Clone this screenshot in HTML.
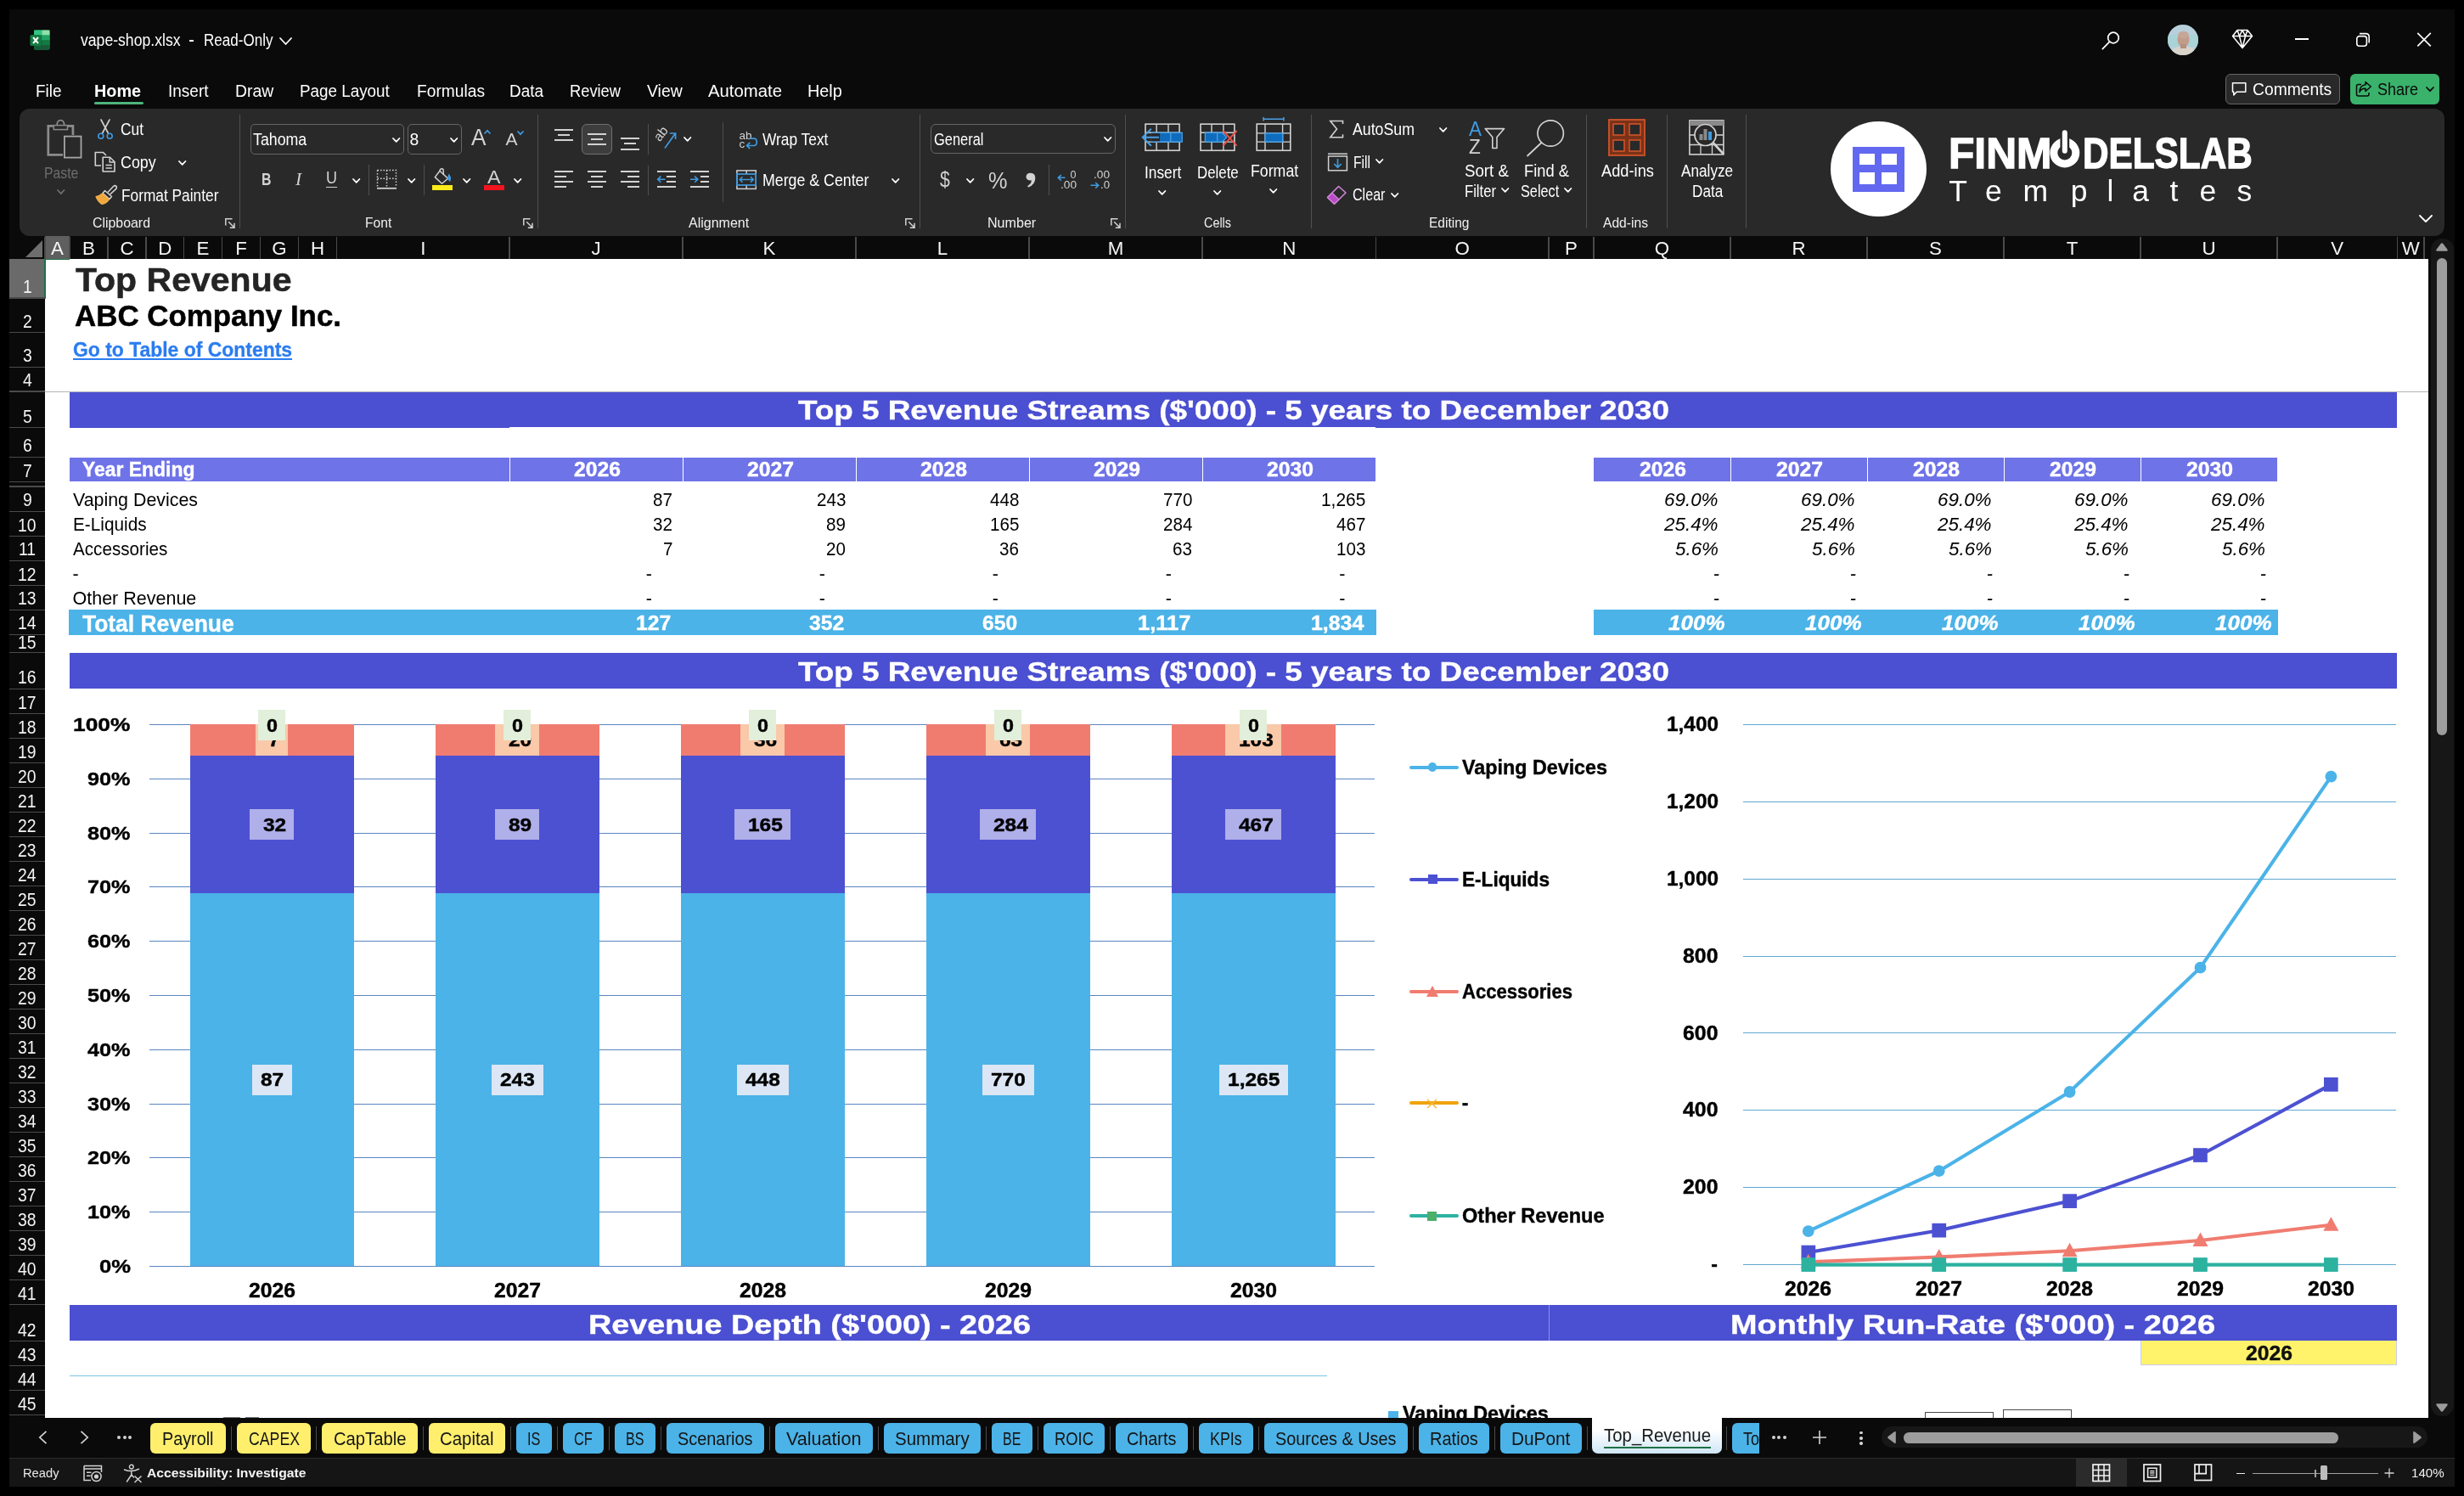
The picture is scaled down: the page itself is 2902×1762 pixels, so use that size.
<!DOCTYPE html><html><head><meta charset="utf-8"><style>
html,body{margin:0;padding:0;background:#000;}
body{width:2902px;height:1762px;position:relative;overflow:hidden;font-family:"Liberation Sans",sans-serif;}
.t{position:absolute;white-space:nowrap;line-height:1;}
.r{position:absolute;}
</style></head><body><div id="w" style="position:absolute;left:0;top:0;width:2902px;height:1762px;will-change:transform">
<div class="r" style="left:11.00px;top:11.00px;width:2880.00px;height:1740.00px;background:#0a0a0a;"></div>
<div class="r" style="left:53.00px;top:305.00px;width:2807.00px;height:1365.00px;background:#fff;"></div>
<div class="r" style="left:53.00px;top:460.50px;width:2807.00px;height:1.00px;background:#b4b4b4;"></div>
<div class="t" style="left:88.50px;top:311.00px;font-size:38.50px;color:#242424;font-weight:bold;transform:scaleX(1.0654);transform-origin:0 0;-webkit-text-stroke:0.5px #242424;">Top Revenue</div>
<div class="t" style="left:87.50px;top:355.00px;font-size:34.50px;color:#000;font-weight:bold;transform:scaleX(1.0112);transform-origin:0 0;-webkit-text-stroke:0.5px #000;">ABC Company Inc.</div>
<div class="t" style="left:86.00px;top:401.00px;font-size:23.00px;color:#2b7cf0;font-weight:bold;transform:scaleX(0.9964);transform-origin:0 0;-webkit-text-stroke:0.3px #2b7cf0;">Go to Table of Contents</div>
<div class="r" style="left:86.00px;top:421.60px;width:258.00px;height:2.00px;background:#2b7cf0;"></div>
<div class="r" style="left:82.00px;top:461.50px;width:2741.00px;height:42.00px;background:#4b4fd1;"></div>
<div class="r" style="left:600.00px;top:502.70px;width:1020.00px;height:0.80px;background:#fff;"></div>
<div class="t" style="left:939.50px;top:467.00px;font-size:32.00px;color:#fff;font-weight:bold;transform:scaleX(1.1515);transform-origin:0 0;-webkit-text-stroke-width:0.4px;">Top 5 Revenue Streams ($'000) - 5 years to December 2030</div>
<div class="r" style="left:82.00px;top:768.80px;width:2741.00px;height:42.40px;background:#4b4fd1;"></div>
<div class="t" style="left:939.50px;top:775.00px;font-size:32.00px;color:#fff;font-weight:bold;transform:scaleX(1.1515);transform-origin:0 0;-webkit-text-stroke-width:0.4px;">Top 5 Revenue Streams ($'000) - 5 years to December 2030</div>
<div class="r" style="left:82.00px;top:539.00px;width:1538.00px;height:28.00px;background:#6f73e8;"></div>
<div class="r" style="left:599.50px;top:539.00px;width:1.50px;height:28.00px;background:#fff;"></div>
<div class="r" style="left:803.50px;top:539.00px;width:1.50px;height:28.00px;background:#fff;"></div>
<div class="r" style="left:1007.50px;top:539.00px;width:1.50px;height:28.00px;background:#fff;"></div>
<div class="r" style="left:1211.50px;top:539.00px;width:1.50px;height:28.00px;background:#fff;"></div>
<div class="r" style="left:1415.50px;top:539.00px;width:1.50px;height:28.00px;background:#fff;"></div>
<div class="t" style="left:97.00px;top:542.00px;font-size:23.00px;color:#fff;font-weight:bold;transform:scaleX(0.9968);transform-origin:0 0;-webkit-text-stroke-width:0.4px;">Year Ending</div>
<div class="t" style="left:675.50px;top:542.00px;font-size:23.00px;color:#fff;font-weight:bold;transform:scaleX(1.0749);transform-origin:0 0;-webkit-text-stroke-width:0.4px;">2026</div>
<div class="t" style="left:879.50px;top:542.00px;font-size:23.00px;color:#fff;font-weight:bold;transform:scaleX(1.0749);transform-origin:0 0;-webkit-text-stroke-width:0.4px;">2027</div>
<div class="t" style="left:1083.50px;top:542.00px;font-size:23.00px;color:#fff;font-weight:bold;transform:scaleX(1.0749);transform-origin:0 0;-webkit-text-stroke-width:0.4px;">2028</div>
<div class="t" style="left:1287.50px;top:542.00px;font-size:23.00px;color:#fff;font-weight:bold;transform:scaleX(1.0749);transform-origin:0 0;-webkit-text-stroke-width:0.4px;">2029</div>
<div class="t" style="left:1491.75px;top:542.00px;font-size:23.00px;color:#fff;font-weight:bold;transform:scaleX(1.0749);transform-origin:0 0;-webkit-text-stroke-width:0.4px;">2030</div>
<div class="r" style="left:1877.00px;top:539.00px;width:805.00px;height:28.00px;background:#6f73e8;"></div>
<div class="r" style="left:2037.50px;top:539.00px;width:1.50px;height:28.00px;background:#fff;"></div>
<div class="r" style="left:2198.50px;top:539.00px;width:1.50px;height:28.00px;background:#fff;"></div>
<div class="r" style="left:2359.50px;top:539.00px;width:1.50px;height:28.00px;background:#fff;"></div>
<div class="r" style="left:2520.50px;top:539.00px;width:1.50px;height:28.00px;background:#fff;"></div>
<div class="t" style="left:1931.00px;top:542.00px;font-size:23.00px;color:#fff;font-weight:bold;transform:scaleX(1.0749);transform-origin:0 0;-webkit-text-stroke-width:0.4px;">2026</div>
<div class="t" style="left:2092.00px;top:542.00px;font-size:23.00px;color:#fff;font-weight:bold;transform:scaleX(1.0749);transform-origin:0 0;-webkit-text-stroke-width:0.4px;">2027</div>
<div class="t" style="left:2253.00px;top:542.00px;font-size:23.00px;color:#fff;font-weight:bold;transform:scaleX(1.0749);transform-origin:0 0;-webkit-text-stroke-width:0.4px;">2028</div>
<div class="t" style="left:2414.00px;top:542.00px;font-size:23.00px;color:#fff;font-weight:bold;transform:scaleX(1.0749);transform-origin:0 0;-webkit-text-stroke-width:0.4px;">2029</div>
<div class="t" style="left:2575.00px;top:542.00px;font-size:23.00px;color:#fff;font-weight:bold;transform:scaleX(1.0749);transform-origin:0 0;-webkit-text-stroke-width:0.4px;">2030</div>
<div class="t" style="left:85.50px;top:579.00px;font-size:21.50px;color:#000;transform:scaleX(0.9946);transform-origin:0 0;">Vaping Devices</div>
<div class="t" style="left:769.30px;top:579.00px;font-size:21.50px;color:#000;transform:scaleX(0.9576);transform-origin:0 0;">87</div>
<div class="t" style="left:961.85px;top:579.00px;font-size:21.50px;color:#000;transform:scaleX(0.9576);transform-origin:0 0;">243</div>
<div class="t" style="left:1165.85px;top:579.00px;font-size:21.50px;color:#000;transform:scaleX(0.9576);transform-origin:0 0;">448</div>
<div class="t" style="left:1369.85px;top:579.00px;font-size:21.50px;color:#000;transform:scaleX(0.9576);transform-origin:0 0;">770</div>
<div class="t" style="left:1556.40px;top:579.00px;font-size:21.50px;color:#000;transform:scaleX(0.9721);transform-origin:0 0;">1,265</div>
<div class="t" style="left:1960.10px;top:579.00px;font-size:21.50px;color:#000;font-style:italic;transform:scaleX(1.0416);transform-origin:0 0;">69.0%</div>
<div class="t" style="left:2121.10px;top:579.00px;font-size:21.50px;color:#000;font-style:italic;transform:scaleX(1.0416);transform-origin:0 0;">69.0%</div>
<div class="t" style="left:2282.10px;top:579.00px;font-size:21.50px;color:#000;font-style:italic;transform:scaleX(1.0416);transform-origin:0 0;">69.0%</div>
<div class="t" style="left:2443.10px;top:579.00px;font-size:21.50px;color:#000;font-style:italic;transform:scaleX(1.0416);transform-origin:0 0;">69.0%</div>
<div class="t" style="left:2604.10px;top:579.00px;font-size:21.50px;color:#000;font-style:italic;transform:scaleX(1.0416);transform-origin:0 0;">69.0%</div>
<div class="t" style="left:85.50px;top:608.00px;font-size:21.50px;color:#000;transform:scaleX(0.9662);transform-origin:0 0;">E-Liquids</div>
<div class="t" style="left:769.30px;top:608.00px;font-size:21.50px;color:#000;transform:scaleX(0.9576);transform-origin:0 0;">32</div>
<div class="t" style="left:973.30px;top:608.00px;font-size:21.50px;color:#000;transform:scaleX(0.9576);transform-origin:0 0;">89</div>
<div class="t" style="left:1165.85px;top:608.00px;font-size:21.50px;color:#000;transform:scaleX(0.9576);transform-origin:0 0;">165</div>
<div class="t" style="left:1369.85px;top:608.00px;font-size:21.50px;color:#000;transform:scaleX(0.9576);transform-origin:0 0;">284</div>
<div class="t" style="left:1574.35px;top:608.00px;font-size:21.50px;color:#000;transform:scaleX(0.9576);transform-origin:0 0;">467</div>
<div class="t" style="left:1960.10px;top:608.00px;font-size:21.50px;color:#000;font-style:italic;transform:scaleX(1.0416);transform-origin:0 0;">25.4%</div>
<div class="t" style="left:2121.10px;top:608.00px;font-size:21.50px;color:#000;font-style:italic;transform:scaleX(1.0416);transform-origin:0 0;">25.4%</div>
<div class="t" style="left:2282.10px;top:608.00px;font-size:21.50px;color:#000;font-style:italic;transform:scaleX(1.0416);transform-origin:0 0;">25.4%</div>
<div class="t" style="left:2443.10px;top:608.00px;font-size:21.50px;color:#000;font-style:italic;transform:scaleX(1.0416);transform-origin:0 0;">25.4%</div>
<div class="t" style="left:2604.10px;top:608.00px;font-size:21.50px;color:#000;font-style:italic;transform:scaleX(1.0416);transform-origin:0 0;">25.4%</div>
<div class="t" style="left:85.50px;top:637.00px;font-size:21.50px;color:#000;transform:scaleX(0.9603);transform-origin:0 0;">Accessories</div>
<div class="t" style="left:780.75px;top:637.00px;font-size:21.50px;color:#000;transform:scaleX(0.9576);transform-origin:0 0;">7</div>
<div class="t" style="left:973.30px;top:637.00px;font-size:21.50px;color:#000;transform:scaleX(0.9576);transform-origin:0 0;">20</div>
<div class="t" style="left:1177.30px;top:637.00px;font-size:21.50px;color:#000;transform:scaleX(0.9576);transform-origin:0 0;">36</div>
<div class="t" style="left:1381.30px;top:637.00px;font-size:21.50px;color:#000;transform:scaleX(0.9576);transform-origin:0 0;">63</div>
<div class="t" style="left:1574.35px;top:637.00px;font-size:21.50px;color:#000;transform:scaleX(0.9576);transform-origin:0 0;">103</div>
<div class="t" style="left:1972.60px;top:637.00px;font-size:21.50px;color:#000;font-style:italic;transform:scaleX(1.0407);transform-origin:0 0;">5.6%</div>
<div class="t" style="left:2133.60px;top:637.00px;font-size:21.50px;color:#000;font-style:italic;transform:scaleX(1.0407);transform-origin:0 0;">5.6%</div>
<div class="t" style="left:2294.60px;top:637.00px;font-size:21.50px;color:#000;font-style:italic;transform:scaleX(1.0407);transform-origin:0 0;">5.6%</div>
<div class="t" style="left:2455.60px;top:637.00px;font-size:21.50px;color:#000;font-style:italic;transform:scaleX(1.0407);transform-origin:0 0;">5.6%</div>
<div class="t" style="left:2616.60px;top:637.00px;font-size:21.50px;color:#000;font-style:italic;transform:scaleX(1.0407);transform-origin:0 0;">5.6%</div>
<div class="t" style="left:85.50px;top:666.00px;font-size:21.50px;color:#000;">-</div>
<div class="t" style="left:760.84px;top:666.00px;font-size:21.50px;color:#000;">-</div>
<div class="t" style="left:964.84px;top:666.00px;font-size:21.50px;color:#000;">-</div>
<div class="t" style="left:1168.84px;top:666.00px;font-size:21.50px;color:#000;">-</div>
<div class="t" style="left:1372.84px;top:666.00px;font-size:21.50px;color:#000;">-</div>
<div class="t" style="left:1577.34px;top:666.00px;font-size:21.50px;color:#000;">-</div>
<div class="t" style="left:2017.84px;top:666.00px;font-size:21.50px;color:#000;font-style:italic;">-</div>
<div class="t" style="left:2178.84px;top:666.00px;font-size:21.50px;color:#000;font-style:italic;">-</div>
<div class="t" style="left:2339.84px;top:666.00px;font-size:21.50px;color:#000;font-style:italic;">-</div>
<div class="t" style="left:2500.84px;top:666.00px;font-size:21.50px;color:#000;font-style:italic;">-</div>
<div class="t" style="left:2661.84px;top:666.00px;font-size:21.50px;color:#000;font-style:italic;">-</div>
<div class="t" style="left:85.50px;top:695.00px;font-size:21.50px;color:#000;">Other Revenue</div>
<div class="t" style="left:760.84px;top:695.00px;font-size:21.50px;color:#000;">-</div>
<div class="t" style="left:964.84px;top:695.00px;font-size:21.50px;color:#000;">-</div>
<div class="t" style="left:1168.84px;top:695.00px;font-size:21.50px;color:#000;">-</div>
<div class="t" style="left:1372.84px;top:695.00px;font-size:21.50px;color:#000;">-</div>
<div class="t" style="left:1577.34px;top:695.00px;font-size:21.50px;color:#000;">-</div>
<div class="t" style="left:2017.84px;top:695.00px;font-size:21.50px;color:#000;font-style:italic;">-</div>
<div class="t" style="left:2178.84px;top:695.00px;font-size:21.50px;color:#000;font-style:italic;">-</div>
<div class="t" style="left:2339.84px;top:695.00px;font-size:21.50px;color:#000;font-style:italic;">-</div>
<div class="t" style="left:2500.84px;top:695.00px;font-size:21.50px;color:#000;font-style:italic;">-</div>
<div class="t" style="left:2661.84px;top:695.00px;font-size:21.50px;color:#000;font-style:italic;">-</div>
<div class="r" style="left:81.00px;top:718.00px;width:1539.50px;height:29.70px;background:#4bb3e8;"></div>
<div class="t" style="left:97.40px;top:722.00px;font-size:27.00px;color:#fff;font-weight:bold;transform:scaleX(0.9784);transform-origin:0 0;-webkit-text-stroke-width:0.4px;">Total Revenue</div>
<div class="t" style="left:748.70px;top:723.00px;font-size:23.00px;color:#fff;font-weight:bold;transform:scaleX(1.0710);transform-origin:0 0;-webkit-text-stroke-width:0.4px;">127</div>
<div class="t" style="left:952.70px;top:723.00px;font-size:23.00px;color:#fff;font-weight:bold;transform:scaleX(1.0710);transform-origin:0 0;-webkit-text-stroke-width:0.4px;">352</div>
<div class="t" style="left:1156.70px;top:723.00px;font-size:23.00px;color:#fff;font-weight:bold;transform:scaleX(1.0710);transform-origin:0 0;-webkit-text-stroke-width:0.4px;">650</div>
<div class="t" style="left:1339.50px;top:723.00px;font-size:23.00px;color:#fff;font-weight:bold;transform:scaleX(1.1068);transform-origin:0 0;-webkit-text-stroke-width:0.4px;">1,117</div>
<div class="t" style="left:1544.00px;top:723.00px;font-size:23.00px;color:#fff;font-weight:bold;transform:scaleX(1.0824);transform-origin:0 0;-webkit-text-stroke-width:0.4px;">1,834</div>
<div class="r" style="left:1877.00px;top:718.00px;width:806.00px;height:29.70px;background:#4bb3e8;"></div>
<div class="t" style="left:1964.60px;top:723.00px;font-size:23.00px;color:#fff;font-weight:bold;font-style:italic;transform:scaleX(1.1322);transform-origin:0 0;-webkit-text-stroke-width:0.4px;">100%</div>
<div class="t" style="left:2125.60px;top:723.00px;font-size:23.00px;color:#fff;font-weight:bold;font-style:italic;transform:scaleX(1.1322);transform-origin:0 0;-webkit-text-stroke-width:0.4px;">100%</div>
<div class="t" style="left:2286.60px;top:723.00px;font-size:23.00px;color:#fff;font-weight:bold;font-style:italic;transform:scaleX(1.1322);transform-origin:0 0;-webkit-text-stroke-width:0.4px;">100%</div>
<div class="t" style="left:2447.60px;top:723.00px;font-size:23.00px;color:#fff;font-weight:bold;font-style:italic;transform:scaleX(1.1322);transform-origin:0 0;-webkit-text-stroke-width:0.4px;">100%</div>
<div class="t" style="left:2608.60px;top:723.00px;font-size:23.00px;color:#fff;font-weight:bold;font-style:italic;transform:scaleX(1.1322);transform-origin:0 0;-webkit-text-stroke-width:0.4px;">100%</div>
<div class="r" style="left:82.00px;top:1537.00px;width:2741.00px;height:42.30px;background:#4b4fd1;"></div>
<div class="r" style="left:1823.50px;top:1537.00px;width:1.00px;height:42.30px;background:#8f92e6;"></div>
<div class="t" style="left:692.50px;top:1544.00px;font-size:32.00px;color:#fff;font-weight:bold;transform:scaleX(1.1799);transform-origin:0 0;-webkit-text-stroke-width:0.4px;">Revenue Depth ($'000) - 2026</div>
<div class="t" style="left:2038.00px;top:1544.00px;font-size:32.00px;color:#fff;font-weight:bold;transform:scaleX(1.1837);transform-origin:0 0;-webkit-text-stroke-width:0.4px;">Monthly Run-Rate ($'000) - 2026</div>
<div class="r" style="left:2520.50px;top:1579.30px;width:302.50px;height:28.70px;background:#fff36b;box-sizing:border-box;border:1.5px solid #c9cde6;border-top:none"></div>
<div class="t" style="left:2644.50px;top:1583.00px;font-size:23.00px;color:#111;font-weight:bold;transform:scaleX(1.0749);transform-origin:0 0;-webkit-text-stroke-width:0.4px;">2026</div>
<div class="r" style="left:82.00px;top:1620.00px;width:1481.00px;height:1.20px;background:#7cc4e6;"></div>
<div class="r" style="left:1635.40px;top:1661.70px;width:11.20px;height:11.30px;background:#4bb3e8;"></div>
<div class="t" style="left:1651.50px;top:1654.00px;font-size:23.00px;color:#000;font-weight:bold;transform:scaleX(1.0175);transform-origin:0 0;-webkit-text-stroke-width:0.4px;">Vaping Devices</div>
<div class="r" style="left:2267.30px;top:1662.60px;width:80.70px;height:17.40px;background:#fff;box-sizing:border-box;border:1.4px solid #4a4a4a"></div>
<div class="r" style="left:2359.30px;top:1660.00px;width:80.70px;height:20.00px;background:#fff;box-sizing:border-box;border:1.4px solid #4a4a4a"></div>
<div class="r" style="left:263.00px;top:1668.80px;width:20.00px;height:1.20px;background:#777;"></div>
<div class="r" style="left:289.00px;top:1668.80px;width:16.00px;height:1.20px;background:#777;"></div>
<div class="r" style="left:176.00px;top:1491.00px;width:1442.50px;height:1.00px;background:#5a86c0;"></div>
<div class="t" style="left:116.50px;top:1480.00px;font-size:22.90px;color:#000;font-weight:bold;transform:scaleX(1.1179);transform-origin:0 0;-webkit-text-stroke-width:0.4px;">0%</div>
<div class="r" style="left:176.00px;top:1427.00px;width:1442.50px;height:1.00px;background:#5a86c0;"></div>
<div class="t" style="left:103.00px;top:1416.00px;font-size:22.90px;color:#000;font-weight:bold;transform:scaleX(1.1018);transform-origin:0 0;-webkit-text-stroke-width:0.4px;">10%</div>
<div class="r" style="left:176.00px;top:1363.00px;width:1442.50px;height:1.00px;background:#5a86c0;"></div>
<div class="t" style="left:103.00px;top:1352.00px;font-size:22.90px;color:#000;font-weight:bold;transform:scaleX(1.1018);transform-origin:0 0;-webkit-text-stroke-width:0.4px;">20%</div>
<div class="r" style="left:176.00px;top:1300.00px;width:1442.50px;height:1.00px;background:#5a86c0;"></div>
<div class="t" style="left:103.00px;top:1289.00px;font-size:22.90px;color:#000;font-weight:bold;transform:scaleX(1.1018);transform-origin:0 0;-webkit-text-stroke-width:0.4px;">30%</div>
<div class="r" style="left:176.00px;top:1236.00px;width:1442.50px;height:1.00px;background:#5a86c0;"></div>
<div class="t" style="left:103.00px;top:1225.00px;font-size:22.90px;color:#000;font-weight:bold;transform:scaleX(1.1018);transform-origin:0 0;-webkit-text-stroke-width:0.4px;">40%</div>
<div class="r" style="left:176.00px;top:1172.00px;width:1442.50px;height:1.00px;background:#5a86c0;"></div>
<div class="t" style="left:103.00px;top:1161.00px;font-size:22.90px;color:#000;font-weight:bold;transform:scaleX(1.1018);transform-origin:0 0;-webkit-text-stroke-width:0.4px;">50%</div>
<div class="r" style="left:176.00px;top:1108.00px;width:1442.50px;height:1.00px;background:#5a86c0;"></div>
<div class="t" style="left:103.00px;top:1097.00px;font-size:22.90px;color:#000;font-weight:bold;transform:scaleX(1.1018);transform-origin:0 0;-webkit-text-stroke-width:0.4px;">60%</div>
<div class="r" style="left:176.00px;top:1044.00px;width:1442.50px;height:1.00px;background:#5a86c0;"></div>
<div class="t" style="left:103.00px;top:1033.00px;font-size:22.90px;color:#000;font-weight:bold;transform:scaleX(1.1018);transform-origin:0 0;-webkit-text-stroke-width:0.4px;">70%</div>
<div class="r" style="left:176.00px;top:981.00px;width:1442.50px;height:1.00px;background:#5a86c0;"></div>
<div class="t" style="left:103.00px;top:970.00px;font-size:22.90px;color:#000;font-weight:bold;transform:scaleX(1.1018);transform-origin:0 0;-webkit-text-stroke-width:0.4px;">80%</div>
<div class="r" style="left:176.00px;top:917.00px;width:1442.50px;height:1.00px;background:#5a86c0;"></div>
<div class="t" style="left:103.00px;top:906.00px;font-size:22.90px;color:#000;font-weight:bold;transform:scaleX(1.1018);transform-origin:0 0;-webkit-text-stroke-width:0.4px;">90%</div>
<div class="r" style="left:176.00px;top:853.00px;width:1442.50px;height:1.00px;background:#5a86c0;"></div>
<div class="t" style="left:86.00px;top:842.00px;font-size:22.90px;color:#000;font-weight:bold;transform:scaleX(1.1525);transform-origin:0 0;-webkit-text-stroke-width:0.4px;">100%</div>
<div class="r" style="left:224.20px;top:1051.70px;width:192.90px;height:439.80px;background:#4bb3e8;"></div>
<div class="r" style="left:224.20px;top:890.00px;width:192.90px;height:161.70px;background:#4c51d2;"></div>
<div class="r" style="left:224.20px;top:853.40px;width:192.90px;height:36.60px;background:#f07c70;"></div>
<div class="t" style="left:293.10px;top:1509.00px;font-size:23.00px;color:#000;font-weight:bold;transform:scaleX(1.0749);transform-origin:0 0;-webkit-text-stroke-width:0.4px;">2026</div>
<div class="r" style="left:296.60px;top:1253.50px;width:47.20px;height:36.00px;background:#dce6f4;"></div>
<div class="t" style="left:306.60px;top:1262.00px;font-size:21.50px;color:#000;font-weight:bold;transform:scaleX(1.1374);transform-origin:0 0;-webkit-text-stroke-width:0.4px;">87</div>
<div class="r" style="left:294.10px;top:953.00px;width:52.20px;height:36.00px;background:#afafea;"></div>
<div class="t" style="left:309.80px;top:962.00px;font-size:21.50px;color:#000;font-weight:bold;transform:scaleX(1.1374);transform-origin:0 0;-webkit-text-stroke-width:0.4px;">32</div>
<div class="r" style="left:300.90px;top:853.40px;width:38.60px;height:36.60px;background:#f9c9a9;"></div>
<div class="t" style="left:316.40px;top:862.00px;font-size:21.50px;color:#000;font-weight:bold;transform:scaleX(1.1374);transform-origin:0 0;-webkit-text-stroke-width:0.4px;">7</div>
<div class="r" style="left:303.70px;top:836.20px;width:32.50px;height:35.80px;background:#e2efda;"></div>
<div class="t" style="left:313.70px;top:845.00px;font-size:21.50px;color:#000;font-weight:bold;transform:scaleX(1.0872);transform-origin:0 0;-webkit-text-stroke-width:0.4px;">0</div>
<div class="r" style="left:513.20px;top:1051.70px;width:192.90px;height:439.80px;background:#4bb3e8;"></div>
<div class="r" style="left:513.20px;top:890.00px;width:192.90px;height:161.70px;background:#4c51d2;"></div>
<div class="r" style="left:513.20px;top:853.40px;width:192.90px;height:36.60px;background:#f07c70;"></div>
<div class="t" style="left:582.10px;top:1509.00px;font-size:23.00px;color:#000;font-weight:bold;transform:scaleX(1.0749);transform-origin:0 0;-webkit-text-stroke-width:0.4px;">2027</div>
<div class="r" style="left:578.80px;top:1253.50px;width:60.80px;height:36.00px;background:#dce6f4;"></div>
<div class="t" style="left:588.80px;top:1262.00px;font-size:21.50px;color:#000;font-weight:bold;transform:scaleX(1.1374);transform-origin:0 0;-webkit-text-stroke-width:0.4px;">243</div>
<div class="r" style="left:583.10px;top:953.00px;width:52.20px;height:36.00px;background:#afafea;"></div>
<div class="t" style="left:598.80px;top:962.00px;font-size:21.50px;color:#000;font-weight:bold;transform:scaleX(1.1374);transform-origin:0 0;-webkit-text-stroke-width:0.4px;">89</div>
<div class="r" style="left:583.10px;top:853.40px;width:52.20px;height:36.60px;background:#f9c9a9;"></div>
<div class="t" style="left:598.60px;top:862.00px;font-size:21.50px;color:#000;font-weight:bold;transform:scaleX(1.1374);transform-origin:0 0;-webkit-text-stroke-width:0.4px;">20</div>
<div class="r" style="left:592.70px;top:836.20px;width:32.50px;height:35.80px;background:#e2efda;"></div>
<div class="t" style="left:602.70px;top:845.00px;font-size:21.50px;color:#000;font-weight:bold;transform:scaleX(1.0872);transform-origin:0 0;-webkit-text-stroke-width:0.4px;">0</div>
<div class="r" style="left:802.20px;top:1051.70px;width:192.90px;height:439.80px;background:#4bb3e8;"></div>
<div class="r" style="left:802.20px;top:890.00px;width:192.90px;height:161.70px;background:#4c51d2;"></div>
<div class="r" style="left:802.20px;top:853.40px;width:192.90px;height:36.60px;background:#f07c70;"></div>
<div class="t" style="left:871.10px;top:1509.00px;font-size:23.00px;color:#000;font-weight:bold;transform:scaleX(1.0749);transform-origin:0 0;-webkit-text-stroke-width:0.4px;">2028</div>
<div class="r" style="left:867.80px;top:1253.50px;width:60.80px;height:36.00px;background:#dce6f4;"></div>
<div class="t" style="left:877.80px;top:1262.00px;font-size:21.50px;color:#000;font-weight:bold;transform:scaleX(1.1374);transform-origin:0 0;-webkit-text-stroke-width:0.4px;">448</div>
<div class="r" style="left:865.30px;top:953.00px;width:65.80px;height:36.00px;background:#afafea;"></div>
<div class="t" style="left:881.00px;top:962.00px;font-size:21.50px;color:#000;font-weight:bold;transform:scaleX(1.1374);transform-origin:0 0;-webkit-text-stroke-width:0.4px;">165</div>
<div class="r" style="left:872.10px;top:853.40px;width:52.20px;height:36.60px;background:#f9c9a9;"></div>
<div class="t" style="left:887.60px;top:862.00px;font-size:21.50px;color:#000;font-weight:bold;transform:scaleX(1.1374);transform-origin:0 0;-webkit-text-stroke-width:0.4px;">36</div>
<div class="r" style="left:881.70px;top:836.20px;width:32.50px;height:35.80px;background:#e2efda;"></div>
<div class="t" style="left:891.70px;top:845.00px;font-size:21.50px;color:#000;font-weight:bold;transform:scaleX(1.0872);transform-origin:0 0;-webkit-text-stroke-width:0.4px;">0</div>
<div class="r" style="left:1091.20px;top:1051.70px;width:192.90px;height:439.80px;background:#4bb3e8;"></div>
<div class="r" style="left:1091.20px;top:890.00px;width:192.90px;height:161.70px;background:#4c51d2;"></div>
<div class="r" style="left:1091.20px;top:853.40px;width:192.90px;height:36.60px;background:#f07c70;"></div>
<div class="t" style="left:1160.10px;top:1509.00px;font-size:23.00px;color:#000;font-weight:bold;transform:scaleX(1.0749);transform-origin:0 0;-webkit-text-stroke-width:0.4px;">2029</div>
<div class="r" style="left:1156.80px;top:1253.50px;width:60.80px;height:36.00px;background:#dce6f4;"></div>
<div class="t" style="left:1166.80px;top:1262.00px;font-size:21.50px;color:#000;font-weight:bold;transform:scaleX(1.1374);transform-origin:0 0;-webkit-text-stroke-width:0.4px;">770</div>
<div class="r" style="left:1154.30px;top:953.00px;width:65.80px;height:36.00px;background:#afafea;"></div>
<div class="t" style="left:1170.00px;top:962.00px;font-size:21.50px;color:#000;font-weight:bold;transform:scaleX(1.1374);transform-origin:0 0;-webkit-text-stroke-width:0.4px;">284</div>
<div class="r" style="left:1161.10px;top:853.40px;width:52.20px;height:36.60px;background:#f9c9a9;"></div>
<div class="t" style="left:1176.60px;top:862.00px;font-size:21.50px;color:#000;font-weight:bold;transform:scaleX(1.1374);transform-origin:0 0;-webkit-text-stroke-width:0.4px;">63</div>
<div class="r" style="left:1170.70px;top:836.20px;width:32.50px;height:35.80px;background:#e2efda;"></div>
<div class="t" style="left:1180.70px;top:845.00px;font-size:21.50px;color:#000;font-weight:bold;transform:scaleX(1.0872);transform-origin:0 0;-webkit-text-stroke-width:0.4px;">0</div>
<div class="r" style="left:1380.20px;top:1051.70px;width:192.90px;height:439.80px;background:#4bb3e8;"></div>
<div class="r" style="left:1380.20px;top:890.00px;width:192.90px;height:161.70px;background:#4c51d2;"></div>
<div class="r" style="left:1380.20px;top:853.40px;width:192.90px;height:36.60px;background:#f07c70;"></div>
<div class="t" style="left:1449.10px;top:1509.00px;font-size:23.00px;color:#000;font-weight:bold;transform:scaleX(1.0749);transform-origin:0 0;-webkit-text-stroke-width:0.4px;">2030</div>
<div class="r" style="left:1435.50px;top:1253.50px;width:81.40px;height:36.00px;background:#dce6f4;"></div>
<div class="t" style="left:1445.50px;top:1262.00px;font-size:21.50px;color:#000;font-weight:bold;transform:scaleX(1.1412);transform-origin:0 0;-webkit-text-stroke-width:0.4px;">1,265</div>
<div class="r" style="left:1443.30px;top:953.00px;width:65.80px;height:36.00px;background:#afafea;"></div>
<div class="t" style="left:1459.00px;top:962.00px;font-size:21.50px;color:#000;font-weight:bold;transform:scaleX(1.1374);transform-origin:0 0;-webkit-text-stroke-width:0.4px;">467</div>
<div class="r" style="left:1443.30px;top:853.40px;width:65.80px;height:36.60px;background:#f9c9a9;"></div>
<div class="t" style="left:1458.80px;top:862.00px;font-size:21.50px;color:#000;font-weight:bold;transform:scaleX(1.1374);transform-origin:0 0;-webkit-text-stroke-width:0.4px;">103</div>
<div class="r" style="left:1459.70px;top:836.20px;width:32.50px;height:35.80px;background:#e2efda;"></div>
<div class="t" style="left:1469.70px;top:845.00px;font-size:21.50px;color:#000;font-weight:bold;transform:scaleX(1.0872);transform-origin:0 0;-webkit-text-stroke-width:0.4px;">0</div>
<div class="r" style="left:1660.00px;top:901.80px;width:57.80px;height:4.00px;background:#4bb3e8;border-radius:2px"></div>
<div class="r" style="left:1681.80px;top:898.40px;width:10.60px;height:10.60px;background:#4bb3e8;border-radius:50%"></div>
<div class="t" style="left:1721.80px;top:893.00px;font-size:23.00px;color:#000;font-weight:bold;transform:scaleX(1.0133);transform-origin:0 0;-webkit-text-stroke-width:0.4px;">Vaping Devices</div>
<div class="r" style="left:1660.00px;top:1033.80px;width:57.80px;height:4.00px;background:#4c51d2;border-radius:2px"></div>
<div class="r" style="left:1682.00px;top:1030.20px;width:11.00px;height:11.00px;background:#4c51d2;"></div>
<div class="t" style="left:1721.80px;top:1025.00px;font-size:23.00px;color:#000;font-weight:bold;transform:scaleX(0.9831);transform-origin:0 0;-webkit-text-stroke-width:0.4px;">E-Liquids</div>
<div class="r" style="left:1660.00px;top:1165.80px;width:57.80px;height:4.00px;background:#f07c70;border-radius:2px"></div>
<svg class="r" style="left:1680.00px;top:1161.00px;" width="14" height="13" viewBox="0 0 14 13"><path d="M7 0 L14 13 L0 13Z" fill="#f07c70"/></svg>
<div class="t" style="left:1721.80px;top:1157.00px;font-size:23.00px;color:#000;font-weight:bold;transform:scaleX(0.9591);transform-origin:0 0;-webkit-text-stroke-width:0.4px;">Accessories</div>
<div class="r" style="left:1660.00px;top:1297.30px;width:57.80px;height:4.00px;background:#f0a30a;border-radius:2px"></div>
<svg class="r" style="left:1680.00px;top:1293.50px;" width="13" height="12" viewBox="0 0 13 12"><path d="M1 1 L12 11 M12 1 L1 11" stroke="#f5b43c" stroke-width="1.5"/></svg>
<div class="t" style="left:1721.80px;top:1288.00px;font-size:23.00px;color:#000;font-weight:bold;-webkit-text-stroke-width:0.4px;">-</div>
<div class="r" style="left:1660.00px;top:1429.80px;width:57.80px;height:4.00px;background:#2db2a0;border-radius:2px"></div>
<div class="r" style="left:1681.00px;top:1426.50px;width:11.00px;height:11.00px;background:#4caf6a;"></div>
<div class="t" style="left:1721.80px;top:1421.00px;font-size:23.00px;color:#000;font-weight:bold;transform:scaleX(1.0238);transform-origin:0 0;-webkit-text-stroke-width:0.4px;">Other Revenue</div>
<div class="r" style="left:2052.90px;top:1489.00px;width:769.40px;height:1.00px;background:#5fa8d0;"></div>
<div class="t" style="left:2015.34px;top:1478.00px;font-size:23.00px;color:#000;font-weight:bold;-webkit-text-stroke-width:0.4px;">-</div>
<div class="r" style="left:2052.90px;top:1398.00px;width:769.40px;height:1.00px;background:#5fa8d0;"></div>
<div class="t" style="left:1982.00px;top:1387.00px;font-size:23.00px;color:#000;font-weight:bold;transform:scaleX(1.0814);transform-origin:0 0;-webkit-text-stroke-width:0.4px;">200</div>
<div class="r" style="left:2052.90px;top:1307.00px;width:769.40px;height:1.00px;background:#5fa8d0;"></div>
<div class="t" style="left:1982.00px;top:1296.00px;font-size:23.00px;color:#000;font-weight:bold;transform:scaleX(1.0814);transform-origin:0 0;-webkit-text-stroke-width:0.4px;">400</div>
<div class="r" style="left:2052.90px;top:1216.00px;width:769.40px;height:1.00px;background:#5fa8d0;"></div>
<div class="t" style="left:1982.00px;top:1206.00px;font-size:23.00px;color:#000;font-weight:bold;transform:scaleX(1.0814);transform-origin:0 0;-webkit-text-stroke-width:0.4px;">600</div>
<div class="r" style="left:2052.90px;top:1126.00px;width:769.40px;height:1.00px;background:#5fa8d0;"></div>
<div class="t" style="left:1982.00px;top:1115.00px;font-size:23.00px;color:#000;font-weight:bold;transform:scaleX(1.0814);transform-origin:0 0;-webkit-text-stroke-width:0.4px;">800</div>
<div class="r" style="left:2052.90px;top:1035.00px;width:769.40px;height:1.00px;background:#5fa8d0;"></div>
<div class="t" style="left:1962.50px;top:1024.00px;font-size:23.00px;color:#000;font-weight:bold;transform:scaleX(1.0598);transform-origin:0 0;-webkit-text-stroke-width:0.4px;">1,000</div>
<div class="r" style="left:2052.90px;top:944.00px;width:769.40px;height:1.00px;background:#5fa8d0;"></div>
<div class="t" style="left:1962.50px;top:933.00px;font-size:23.00px;color:#000;font-weight:bold;transform:scaleX(1.0598);transform-origin:0 0;-webkit-text-stroke-width:0.4px;">1,200</div>
<div class="r" style="left:2052.90px;top:853.00px;width:769.40px;height:1.00px;background:#5fa8d0;"></div>
<div class="t" style="left:1962.50px;top:842.00px;font-size:23.00px;color:#000;font-weight:bold;transform:scaleX(1.0598);transform-origin:0 0;-webkit-text-stroke-width:0.4px;">1,400</div>
<div class="t" style="left:2102.34px;top:1507.00px;font-size:23.00px;color:#000;font-weight:bold;transform:scaleX(1.0749);transform-origin:0 0;-webkit-text-stroke-width:0.4px;">2026</div>
<div class="t" style="left:2256.22px;top:1507.00px;font-size:23.00px;color:#000;font-weight:bold;transform:scaleX(1.0749);transform-origin:0 0;-webkit-text-stroke-width:0.4px;">2027</div>
<div class="t" style="left:2410.10px;top:1507.00px;font-size:23.00px;color:#000;font-weight:bold;transform:scaleX(1.0749);transform-origin:0 0;-webkit-text-stroke-width:0.4px;">2028</div>
<div class="t" style="left:2563.98px;top:1507.00px;font-size:23.00px;color:#000;font-weight:bold;transform:scaleX(1.0749);transform-origin:0 0;-webkit-text-stroke-width:0.4px;">2029</div>
<div class="t" style="left:2717.86px;top:1507.00px;font-size:23.00px;color:#000;font-weight:bold;transform:scaleX(1.0749);transform-origin:0 0;-webkit-text-stroke-width:0.4px;">2030</div>
<svg class="r" style="left:2040.00px;top:840.00px;" width="800" height="670" viewBox="0 0 800 670"><polyline points="89.8,610.1 243.7,539.2 397.6,446.0 551.5,299.7 705.4,74.7" fill="none" stroke="#4bb3e8" stroke-width="4.1" stroke-linejoin="round" stroke-linecap="round"/><polyline points="89.8,635.1 243.7,609.2 397.6,574.6 551.5,520.5 705.4,437.4" fill="none" stroke="#4c51d2" stroke-width="4.1" stroke-linejoin="round" stroke-linecap="round"/><polyline points="89.8,646.4 243.7,640.5 397.6,633.2 551.5,621.0 705.4,602.8" fill="none" stroke="#f07c70" stroke-width="4.1" stroke-linejoin="round" stroke-linecap="round"/><polyline points="89.8,649.6 243.7,649.6 397.6,649.6 551.5,649.6 705.4,649.6" fill="none" stroke="#2db2a0" stroke-width="4.1" stroke-linejoin="round" stroke-linecap="round"/><circle cx="89.8" cy="610.1" r="6.9" fill="#4bb3e8"/><circle cx="243.7" cy="539.2" r="6.9" fill="#4bb3e8"/><circle cx="397.6" cy="446.0" r="6.9" fill="#4bb3e8"/><circle cx="551.5" cy="299.7" r="6.9" fill="#4bb3e8"/><circle cx="705.4" cy="74.7" r="6.9" fill="#4bb3e8"/><rect x="81.5" y="626.7" width="16.7" height="16.7" fill="#4c51d2"/><rect x="235.4" y="600.8" width="16.7" height="16.7" fill="#4c51d2"/><rect x="389.3" y="566.3" width="16.7" height="16.7" fill="#4c51d2"/><rect x="543.1" y="512.2" width="16.7" height="16.7" fill="#4c51d2"/><rect x="697.0" y="429.0" width="16.7" height="16.7" fill="#4c51d2"/><path d="M89.8 636.9 L98.8 653.4 L80.8 653.4Z" fill="#f07c70"/><path d="M243.7 631.0 L252.7 647.5 L234.7 647.5Z" fill="#f07c70"/><path d="M397.6 623.7 L406.6 640.2 L388.6 640.2Z" fill="#f07c70"/><path d="M551.5 611.5 L560.5 628.0 L542.5 628.0Z" fill="#f07c70"/><path d="M705.4 593.3 L714.4 609.8 L696.4 609.8Z" fill="#f07c70"/><rect x="81.5" y="641.2" width="16.7" height="16.7" fill="#2db2a0"/><rect x="235.4" y="641.2" width="16.7" height="16.7" fill="#2db2a0"/><rect x="389.3" y="641.2" width="16.7" height="16.7" fill="#2db2a0"/><rect x="543.1" y="641.2" width="16.7" height="16.7" fill="#2db2a0"/><rect x="697.0" y="641.2" width="16.7" height="16.7" fill="#2db2a0"/></svg>
<div class="r" style="left:11.00px;top:278.00px;width:2880.00px;height:27.30px;background:#0a0a0a;"></div>
<div class="r" style="left:53.00px;top:278.00px;width:29.00px;height:27.30px;background:#5f5f5f;"></div>
<div class="t" style="left:60.06px;top:282.00px;font-size:22.30px;color:#f4f4f4;">A</div>
<div class="r" style="left:81.40px;top:279.00px;width:1.20px;height:26.00px;background:#4a4a4a;"></div>
<div class="t" style="left:97.06px;top:282.00px;font-size:22.30px;color:#f4f4f4;">B</div>
<div class="r" style="left:126.40px;top:279.00px;width:1.20px;height:26.00px;background:#4a4a4a;"></div>
<div class="t" style="left:141.45px;top:282.00px;font-size:22.30px;color:#f4f4f4;">C</div>
<div class="r" style="left:171.40px;top:279.00px;width:1.20px;height:26.00px;background:#4a4a4a;"></div>
<div class="t" style="left:186.20px;top:282.00px;font-size:22.30px;color:#f4f4f4;">D</div>
<div class="r" style="left:215.90px;top:279.00px;width:1.20px;height:26.00px;background:#4a4a4a;"></div>
<div class="t" style="left:231.56px;top:282.00px;font-size:22.30px;color:#f4f4f4;">E</div>
<div class="r" style="left:260.90px;top:279.00px;width:1.20px;height:26.00px;background:#4a4a4a;"></div>
<div class="t" style="left:277.19px;top:282.00px;font-size:22.30px;color:#f4f4f4;">F</div>
<div class="r" style="left:305.90px;top:279.00px;width:1.20px;height:26.00px;background:#4a4a4a;"></div>
<div class="t" style="left:320.33px;top:282.00px;font-size:22.30px;color:#f4f4f4;">G</div>
<div class="r" style="left:350.90px;top:279.00px;width:1.20px;height:26.00px;background:#4a4a4a;"></div>
<div class="t" style="left:365.95px;top:282.00px;font-size:22.30px;color:#f4f4f4;">H</div>
<div class="r" style="left:395.90px;top:279.00px;width:1.20px;height:26.00px;background:#4a4a4a;"></div>
<div class="t" style="left:495.15px;top:282.00px;font-size:22.30px;color:#f4f4f4;">I</div>
<div class="r" style="left:599.40px;top:279.00px;width:1.20px;height:26.00px;background:#4a4a4a;"></div>
<div class="t" style="left:696.42px;top:282.00px;font-size:22.30px;color:#f4f4f4;">J</div>
<div class="r" style="left:803.40px;top:279.00px;width:1.20px;height:26.00px;background:#4a4a4a;"></div>
<div class="t" style="left:898.56px;top:282.00px;font-size:22.30px;color:#f4f4f4;">K</div>
<div class="r" style="left:1007.40px;top:279.00px;width:1.20px;height:26.00px;background:#4a4a4a;"></div>
<div class="t" style="left:1103.80px;top:282.00px;font-size:22.30px;color:#f4f4f4;">L</div>
<div class="r" style="left:1211.40px;top:279.00px;width:1.20px;height:26.00px;background:#4a4a4a;"></div>
<div class="t" style="left:1304.71px;top:282.00px;font-size:22.30px;color:#f4f4f4;">M</div>
<div class="r" style="left:1415.40px;top:279.00px;width:1.20px;height:26.00px;background:#4a4a4a;"></div>
<div class="t" style="left:1510.20px;top:282.00px;font-size:22.30px;color:#f4f4f4;">N</div>
<div class="r" style="left:1619.90px;top:279.00px;width:1.20px;height:26.00px;background:#4a4a4a;"></div>
<div class="t" style="left:1713.58px;top:282.00px;font-size:22.30px;color:#f4f4f4;">O</div>
<div class="r" style="left:1823.40px;top:279.00px;width:1.20px;height:26.00px;background:#4a4a4a;"></div>
<div class="t" style="left:1843.06px;top:282.00px;font-size:22.30px;color:#f4f4f4;">P</div>
<div class="r" style="left:1876.40px;top:279.00px;width:1.20px;height:26.00px;background:#4a4a4a;"></div>
<div class="t" style="left:1948.83px;top:282.00px;font-size:22.30px;color:#f4f4f4;">Q</div>
<div class="r" style="left:2037.40px;top:279.00px;width:1.20px;height:26.00px;background:#4a4a4a;"></div>
<div class="t" style="left:2110.45px;top:282.00px;font-size:22.30px;color:#f4f4f4;">R</div>
<div class="r" style="left:2198.40px;top:279.00px;width:1.20px;height:26.00px;background:#4a4a4a;"></div>
<div class="t" style="left:2272.06px;top:282.00px;font-size:22.30px;color:#f4f4f4;">S</div>
<div class="r" style="left:2359.40px;top:279.00px;width:1.20px;height:26.00px;background:#4a4a4a;"></div>
<div class="t" style="left:2433.69px;top:282.00px;font-size:22.30px;color:#f4f4f4;">T</div>
<div class="r" style="left:2520.40px;top:279.00px;width:1.20px;height:26.00px;background:#4a4a4a;"></div>
<div class="t" style="left:2593.45px;top:282.00px;font-size:22.30px;color:#f4f4f4;">U</div>
<div class="r" style="left:2681.40px;top:279.00px;width:1.20px;height:26.00px;background:#4a4a4a;"></div>
<div class="t" style="left:2745.31px;top:282.00px;font-size:22.30px;color:#f4f4f4;">V</div>
<div class="r" style="left:2822.90px;top:279.00px;width:1.20px;height:26.00px;background:#4a4a4a;"></div>
<div class="t" style="left:2828.73px;top:282.00px;font-size:22.30px;color:#f4f4f4;">W</div>
<div class="r" style="left:2854.40px;top:279.00px;width:1.20px;height:26.00px;background:#4a4a4a;"></div>
<div class="r" style="left:52.40px;top:279.00px;width:1.20px;height:26.00px;background:#4a4a4a;"></div>
<svg class="r" style="left:28.00px;top:282.00px;" width="24" height="22" viewBox="0 0 24 22"><path d="M22 1 V21 H2 Z" fill="#6e6e6e"/></svg>
<div class="r" style="left:11.00px;top:305.30px;width:42.00px;height:1364.70px;background:#0a0a0a;"></div>
<div class="r" style="left:11.00px;top:305.00px;width:42.00px;height:46.00px;background:#6a6a6a;"></div>
<div class="r" style="left:52.00px;top:305.00px;width:2.00px;height:46.50px;background:#1e7145;"></div>
<div class="r" style="left:53.00px;top:304.50px;width:29.00px;height:1.50px;background:#1e7145;"></div>
<div class="t" style="left:26.62px;top:328.00px;font-size:21.50px;color:#f4f4f4;transform:scaleX(0.9000);transform-origin:0 0;">1</div>
<div class="r" style="left:11.00px;top:350.40px;width:42.00px;height:1.20px;background:#4a4a4a;"></div>
<div class="t" style="left:26.62px;top:369.00px;font-size:21.50px;color:#f4f4f4;transform:scaleX(0.9000);transform-origin:0 0;">2</div>
<div class="r" style="left:11.00px;top:390.90px;width:42.00px;height:1.20px;background:#4a4a4a;"></div>
<div class="t" style="left:26.62px;top:409.00px;font-size:21.50px;color:#f4f4f4;transform:scaleX(0.9000);transform-origin:0 0;">3</div>
<div class="r" style="left:11.00px;top:431.90px;width:42.00px;height:1.20px;background:#4a4a4a;"></div>
<div class="t" style="left:26.62px;top:438.00px;font-size:21.50px;color:#f4f4f4;transform:scaleX(0.9000);transform-origin:0 0;">4</div>
<div class="r" style="left:11.00px;top:460.40px;width:42.00px;height:1.20px;background:#4a4a4a;"></div>
<div class="t" style="left:26.62px;top:481.00px;font-size:21.50px;color:#f4f4f4;transform:scaleX(0.9000);transform-origin:0 0;">5</div>
<div class="r" style="left:11.00px;top:502.90px;width:42.00px;height:1.20px;background:#4a4a4a;"></div>
<div class="t" style="left:26.62px;top:515.00px;font-size:21.50px;color:#f4f4f4;transform:scaleX(0.9000);transform-origin:0 0;">6</div>
<div class="r" style="left:11.00px;top:537.90px;width:42.00px;height:1.20px;background:#4a4a4a;"></div>
<div class="t" style="left:26.62px;top:545.00px;font-size:21.50px;color:#f4f4f4;transform:scaleX(0.9000);transform-origin:0 0;">7</div>
<div class="r" style="left:11.00px;top:566.90px;width:42.00px;height:1.20px;background:#4a4a4a;"></div>
<div class="t" style="left:26.62px;top:579.00px;font-size:21.50px;color:#f4f4f4;transform:scaleX(0.9000);transform-origin:0 0;">9</div>
<div class="r" style="left:11.00px;top:601.90px;width:42.00px;height:1.20px;background:#4a4a4a;"></div>
<div class="t" style="left:21.24px;top:609.00px;font-size:21.50px;color:#f4f4f4;transform:scaleX(0.9000);transform-origin:0 0;">10</div>
<div class="r" style="left:11.00px;top:630.90px;width:42.00px;height:1.20px;background:#4a4a4a;"></div>
<div class="t" style="left:21.96px;top:637.00px;font-size:21.50px;color:#f4f4f4;transform:scaleX(0.9000);transform-origin:0 0;">11</div>
<div class="r" style="left:11.00px;top:659.90px;width:42.00px;height:1.20px;background:#4a4a4a;"></div>
<div class="t" style="left:21.24px;top:667.00px;font-size:21.50px;color:#f4f4f4;transform:scaleX(0.9000);transform-origin:0 0;">12</div>
<div class="r" style="left:11.00px;top:688.90px;width:42.00px;height:1.20px;background:#4a4a4a;"></div>
<div class="t" style="left:21.24px;top:695.00px;font-size:21.50px;color:#f4f4f4;transform:scaleX(0.9000);transform-origin:0 0;">13</div>
<div class="r" style="left:11.00px;top:717.90px;width:42.00px;height:1.20px;background:#4a4a4a;"></div>
<div class="t" style="left:21.24px;top:724.00px;font-size:21.50px;color:#f4f4f4;transform:scaleX(0.9000);transform-origin:0 0;">14</div>
<div class="r" style="left:11.00px;top:746.70px;width:42.00px;height:1.20px;background:#4a4a4a;"></div>
<div class="t" style="left:21.24px;top:747.00px;font-size:21.50px;color:#f4f4f4;transform:scaleX(0.9000);transform-origin:0 0;">15</div>
<div class="r" style="left:11.00px;top:768.20px;width:42.00px;height:1.20px;background:#4a4a4a;"></div>
<div class="t" style="left:21.24px;top:788.00px;font-size:21.50px;color:#f4f4f4;transform:scaleX(0.9000);transform-origin:0 0;">16</div>
<div class="r" style="left:11.00px;top:810.80px;width:42.00px;height:1.20px;background:#4a4a4a;"></div>
<div class="t" style="left:21.24px;top:818.00px;font-size:21.50px;color:#f4f4f4;transform:scaleX(0.9000);transform-origin:0 0;">17</div>
<div class="r" style="left:11.00px;top:840.00px;width:42.00px;height:1.20px;background:#4a4a4a;"></div>
<div class="t" style="left:21.24px;top:847.00px;font-size:21.50px;color:#f4f4f4;transform:scaleX(0.9000);transform-origin:0 0;">18</div>
<div class="r" style="left:11.00px;top:869.00px;width:42.00px;height:1.20px;background:#4a4a4a;"></div>
<div class="t" style="left:21.24px;top:876.00px;font-size:21.50px;color:#f4f4f4;transform:scaleX(0.9000);transform-origin:0 0;">19</div>
<div class="r" style="left:11.00px;top:898.00px;width:42.00px;height:1.20px;background:#4a4a4a;"></div>
<div class="t" style="left:21.24px;top:905.00px;font-size:21.50px;color:#f4f4f4;transform:scaleX(0.9000);transform-origin:0 0;">20</div>
<div class="r" style="left:11.00px;top:927.00px;width:42.00px;height:1.20px;background:#4a4a4a;"></div>
<div class="t" style="left:21.24px;top:934.00px;font-size:21.50px;color:#f4f4f4;transform:scaleX(0.9000);transform-origin:0 0;">21</div>
<div class="r" style="left:11.00px;top:956.00px;width:42.00px;height:1.20px;background:#4a4a4a;"></div>
<div class="t" style="left:21.24px;top:963.00px;font-size:21.50px;color:#f4f4f4;transform:scaleX(0.9000);transform-origin:0 0;">22</div>
<div class="r" style="left:11.00px;top:985.00px;width:42.00px;height:1.20px;background:#4a4a4a;"></div>
<div class="t" style="left:21.24px;top:992.00px;font-size:21.50px;color:#f4f4f4;transform:scaleX(0.9000);transform-origin:0 0;">23</div>
<div class="r" style="left:11.00px;top:1014.00px;width:42.00px;height:1.20px;background:#4a4a4a;"></div>
<div class="t" style="left:21.24px;top:1021.00px;font-size:21.50px;color:#f4f4f4;transform:scaleX(0.9000);transform-origin:0 0;">24</div>
<div class="r" style="left:11.00px;top:1043.00px;width:42.00px;height:1.20px;background:#4a4a4a;"></div>
<div class="t" style="left:21.24px;top:1050.00px;font-size:21.50px;color:#f4f4f4;transform:scaleX(0.9000);transform-origin:0 0;">25</div>
<div class="r" style="left:11.00px;top:1072.00px;width:42.00px;height:1.20px;background:#4a4a4a;"></div>
<div class="t" style="left:21.24px;top:1079.00px;font-size:21.50px;color:#f4f4f4;transform:scaleX(0.9000);transform-origin:0 0;">26</div>
<div class="r" style="left:11.00px;top:1101.00px;width:42.00px;height:1.20px;background:#4a4a4a;"></div>
<div class="t" style="left:21.24px;top:1108.00px;font-size:21.50px;color:#f4f4f4;transform:scaleX(0.9000);transform-origin:0 0;">27</div>
<div class="r" style="left:11.00px;top:1130.00px;width:42.00px;height:1.20px;background:#4a4a4a;"></div>
<div class="t" style="left:21.24px;top:1137.00px;font-size:21.50px;color:#f4f4f4;transform:scaleX(0.9000);transform-origin:0 0;">28</div>
<div class="r" style="left:11.00px;top:1159.00px;width:42.00px;height:1.20px;background:#4a4a4a;"></div>
<div class="t" style="left:21.24px;top:1166.00px;font-size:21.50px;color:#f4f4f4;transform:scaleX(0.9000);transform-origin:0 0;">29</div>
<div class="r" style="left:11.00px;top:1188.00px;width:42.00px;height:1.20px;background:#4a4a4a;"></div>
<div class="t" style="left:21.24px;top:1195.00px;font-size:21.50px;color:#f4f4f4;transform:scaleX(0.9000);transform-origin:0 0;">30</div>
<div class="r" style="left:11.00px;top:1217.00px;width:42.00px;height:1.20px;background:#4a4a4a;"></div>
<div class="t" style="left:21.24px;top:1224.00px;font-size:21.50px;color:#f4f4f4;transform:scaleX(0.9000);transform-origin:0 0;">31</div>
<div class="r" style="left:11.00px;top:1246.00px;width:42.00px;height:1.20px;background:#4a4a4a;"></div>
<div class="t" style="left:21.24px;top:1253.00px;font-size:21.50px;color:#f4f4f4;transform:scaleX(0.9000);transform-origin:0 0;">32</div>
<div class="r" style="left:11.00px;top:1275.00px;width:42.00px;height:1.20px;background:#4a4a4a;"></div>
<div class="t" style="left:21.24px;top:1282.00px;font-size:21.50px;color:#f4f4f4;transform:scaleX(0.9000);transform-origin:0 0;">33</div>
<div class="r" style="left:11.00px;top:1304.00px;width:42.00px;height:1.20px;background:#4a4a4a;"></div>
<div class="t" style="left:21.24px;top:1311.00px;font-size:21.50px;color:#f4f4f4;transform:scaleX(0.9000);transform-origin:0 0;">34</div>
<div class="r" style="left:11.00px;top:1333.00px;width:42.00px;height:1.20px;background:#4a4a4a;"></div>
<div class="t" style="left:21.24px;top:1340.00px;font-size:21.50px;color:#f4f4f4;transform:scaleX(0.9000);transform-origin:0 0;">35</div>
<div class="r" style="left:11.00px;top:1362.00px;width:42.00px;height:1.20px;background:#4a4a4a;"></div>
<div class="t" style="left:21.24px;top:1369.00px;font-size:21.50px;color:#f4f4f4;transform:scaleX(0.9000);transform-origin:0 0;">36</div>
<div class="r" style="left:11.00px;top:1391.00px;width:42.00px;height:1.20px;background:#4a4a4a;"></div>
<div class="t" style="left:21.24px;top:1398.00px;font-size:21.50px;color:#f4f4f4;transform:scaleX(0.9000);transform-origin:0 0;">37</div>
<div class="r" style="left:11.00px;top:1420.00px;width:42.00px;height:1.20px;background:#4a4a4a;"></div>
<div class="t" style="left:21.24px;top:1427.00px;font-size:21.50px;color:#f4f4f4;transform:scaleX(0.9000);transform-origin:0 0;">38</div>
<div class="r" style="left:11.00px;top:1449.00px;width:42.00px;height:1.20px;background:#4a4a4a;"></div>
<div class="t" style="left:21.24px;top:1456.00px;font-size:21.50px;color:#f4f4f4;transform:scaleX(0.9000);transform-origin:0 0;">39</div>
<div class="r" style="left:11.00px;top:1478.00px;width:42.00px;height:1.20px;background:#4a4a4a;"></div>
<div class="t" style="left:21.24px;top:1485.00px;font-size:21.50px;color:#f4f4f4;transform:scaleX(0.9000);transform-origin:0 0;">40</div>
<div class="r" style="left:11.00px;top:1507.00px;width:42.00px;height:1.20px;background:#4a4a4a;"></div>
<div class="t" style="left:21.24px;top:1514.00px;font-size:21.50px;color:#f4f4f4;transform:scaleX(0.9000);transform-origin:0 0;">41</div>
<div class="r" style="left:11.00px;top:1536.00px;width:42.00px;height:1.20px;background:#4a4a4a;"></div>
<div class="t" style="left:21.24px;top:1557.00px;font-size:21.50px;color:#f4f4f4;transform:scaleX(0.9000);transform-origin:0 0;">42</div>
<div class="r" style="left:11.00px;top:1578.90px;width:42.00px;height:1.20px;background:#4a4a4a;"></div>
<div class="t" style="left:21.24px;top:1586.00px;font-size:21.50px;color:#f4f4f4;transform:scaleX(0.9000);transform-origin:0 0;">43</div>
<div class="r" style="left:11.00px;top:1608.10px;width:42.00px;height:1.20px;background:#4a4a4a;"></div>
<div class="t" style="left:21.24px;top:1615.00px;font-size:21.50px;color:#f4f4f4;transform:scaleX(0.9000);transform-origin:0 0;">44</div>
<div class="r" style="left:11.00px;top:1637.00px;width:42.00px;height:1.20px;background:#4a4a4a;"></div>
<div class="t" style="left:21.24px;top:1644.00px;font-size:21.50px;color:#f4f4f4;transform:scaleX(0.9000);transform-origin:0 0;">45</div>
<div class="r" style="left:11.00px;top:1666.20px;width:42.00px;height:1.20px;background:#4a4a4a;"></div>
<div class="t" style="left:21.24px;top:1673.00px;font-size:21.50px;color:#f4f4f4;transform:scaleX(0.9000);transform-origin:0 0;">46</div>
<div class="r" style="left:11.00px;top:1695.40px;width:42.00px;height:1.20px;background:#4a4a4a;"></div>
<div class="r" style="left:11.00px;top:572.40px;width:42.00px;height:1.20px;background:#4a4a4a;"></div>
<div class="r" style="left:11.00px;top:1670.00px;width:2880.00px;height:48.00px;background:#0a0a0a;"></div>
<div class="r" style="left:11.00px;top:1718.00px;width:2880.00px;height:33.00px;background:#151515;"></div>
<div class="r" style="left:11.00px;top:1717.40px;width:2880.00px;height:1.00px;background:#2c2c2c;"></div>
<div class="r" style="left:2860.00px;top:278.00px;width:31.00px;height:1392.00px;background:#0a0a0a;"></div>
<div class="r" style="left:2862.75px;top:281.00px;width:26.85px;height:1387.00px;background:#171717;border-radius:13px"></div>
<svg class="r" style="left:2868.00px;top:285.00px;" width="16" height="12" viewBox="0 0 16 12"><path d="M8 1.2 Q8.8 1.2 9.5 2.3 L14.6 9 Q15.4 10.8 13.6 10.8 H2.4 Q0.6 10.8 1.4 9 L6.5 2.3 Q7.2 1.2 8 1.2Z" fill="#9c9c9c"/></svg>
<svg class="r" style="left:2868.00px;top:1652.00px;" width="16" height="12" viewBox="0 0 16 12"><path d="M8 10.8 Q8.8 10.8 9.5 9.7 L14.6 3 Q15.4 1.2 13.6 1.2 H2.4 Q0.6 1.2 1.4 3 L6.5 9.7 Q7.2 10.8 8 10.8Z" fill="#9c9c9c"/></svg>
<div class="r" style="left:2869.90px;top:304.00px;width:12.20px;height:562.00px;background:#9d9d9d;border-radius:6px"></div>
<svg class="r" style="left:44.00px;top:1684.00px;" width="14" height="18" viewBox="0 0 14 18"><path d="M10.5 1.8 L2.8 9 L10.5 16.2" fill="none" stroke="#d2d2d2" stroke-width="1.7"/></svg>
<svg class="r" style="left:92.00px;top:1684.00px;" width="14" height="18" viewBox="0 0 14 18"><path d="M3.5 1.8 L11.2 9 L3.5 16.2" fill="none" stroke="#d2d2d2" stroke-width="1.7"/></svg>
<div class="r" style="left:138.30px;top:1690.60px;width:4.20px;height:4.20px;background:#d2d2d2;border-radius:50%"></div>
<div class="r" style="left:144.60px;top:1690.60px;width:4.20px;height:4.20px;background:#d2d2d2;border-radius:50%"></div>
<div class="r" style="left:150.90px;top:1690.60px;width:4.20px;height:4.20px;background:#d2d2d2;border-radius:50%"></div>
<div class="r" style="left:177.00px;top:1676.25px;width:88.75px;height:35.50px;background:#ffef6c;border-radius:6px"></div>
<div class="t" style="left:191.25px;top:1685.00px;font-size:21.50px;color:#151515;transform:scaleX(0.9206);transform-origin:0 0;">Payroll</div>
<div class="r" style="left:271.85px;top:1680.00px;width:1.20px;height:27.50px;background:#4a4a4a;"></div>
<div class="r" style="left:279.25px;top:1676.25px;width:86.50px;height:35.50px;background:#ffef6c;border-radius:6px"></div>
<div class="t" style="left:292.50px;top:1685.00px;font-size:21.50px;color:#151515;transform:scaleX(0.8232);transform-origin:0 0;">CAPEX</div>
<div class="r" style="left:371.85px;top:1680.00px;width:1.20px;height:27.50px;background:#4a4a4a;"></div>
<div class="r" style="left:379.25px;top:1676.25px;width:112.50px;height:35.50px;background:#ffef6c;border-radius:6px"></div>
<div class="t" style="left:392.50px;top:1685.00px;font-size:21.50px;color:#151515;transform:scaleX(0.9412);transform-origin:0 0;">CapTable</div>
<div class="r" style="left:497.85px;top:1680.00px;width:1.20px;height:27.50px;background:#4a4a4a;"></div>
<div class="r" style="left:505.00px;top:1676.25px;width:90.00px;height:35.50px;background:#ffef6c;border-radius:6px"></div>
<div class="t" style="left:518.25px;top:1685.00px;font-size:21.50px;color:#151515;transform:scaleX(0.9488);transform-origin:0 0;">Capital</div>
<div class="r" style="left:601.10px;top:1680.00px;width:1.20px;height:27.50px;background:#4a4a4a;"></div>
<div class="r" style="left:608.00px;top:1676.25px;width:41.80px;height:35.50px;background:#4bb3e8;border-radius:6px"></div>
<div class="t" style="left:621.20px;top:1685.00px;font-size:21.50px;color:#151515;transform:scaleX(0.7581);transform-origin:0 0;">IS</div>
<div class="r" style="left:655.90px;top:1680.00px;width:1.20px;height:27.50px;background:#4a4a4a;"></div>
<div class="r" style="left:662.70px;top:1676.25px;width:48.30px;height:35.50px;background:#4bb3e8;border-radius:6px"></div>
<div class="t" style="left:675.90px;top:1685.00px;font-size:21.50px;color:#151515;transform:scaleX(0.7641);transform-origin:0 0;">CF</div>
<div class="r" style="left:717.10px;top:1680.00px;width:1.20px;height:27.50px;background:#4a4a4a;"></div>
<div class="r" style="left:724.00px;top:1676.25px;width:47.90px;height:35.50px;background:#4bb3e8;border-radius:6px"></div>
<div class="t" style="left:737.20px;top:1685.00px;font-size:21.50px;color:#151515;transform:scaleX(0.7496);transform-origin:0 0;">BS</div>
<div class="r" style="left:778.00px;top:1680.00px;width:1.20px;height:27.50px;background:#4a4a4a;"></div>
<div class="r" style="left:784.90px;top:1676.25px;width:114.90px;height:35.50px;background:#4bb3e8;border-radius:6px"></div>
<div class="t" style="left:798.10px;top:1685.00px;font-size:21.50px;color:#151515;transform:scaleX(0.9257);transform-origin:0 0;">Scenarios</div>
<div class="r" style="left:905.90px;top:1680.00px;width:1.20px;height:27.50px;background:#4a4a4a;"></div>
<div class="r" style="left:913.00px;top:1676.25px;width:114.80px;height:35.50px;background:#4bb3e8;border-radius:6px"></div>
<div class="t" style="left:926.20px;top:1685.00px;font-size:21.50px;color:#151515;transform:scaleX(1.0039);transform-origin:0 0;">Valuation</div>
<div class="r" style="left:1033.90px;top:1680.00px;width:1.20px;height:27.50px;background:#4a4a4a;"></div>
<div class="r" style="left:1040.80px;top:1676.25px;width:114.10px;height:35.50px;background:#4bb3e8;border-radius:6px"></div>
<div class="t" style="left:1054.00px;top:1685.00px;font-size:21.50px;color:#151515;transform:scaleX(0.9534);transform-origin:0 0;">Summary</div>
<div class="r" style="left:1161.00px;top:1680.00px;width:1.20px;height:27.50px;background:#4a4a4a;"></div>
<div class="r" style="left:1167.90px;top:1676.25px;width:47.80px;height:35.50px;background:#4bb3e8;border-radius:6px"></div>
<div class="t" style="left:1181.10px;top:1685.00px;font-size:21.50px;color:#151515;transform:scaleX(0.7461);transform-origin:0 0;">BE</div>
<div class="r" style="left:1221.80px;top:1680.00px;width:1.20px;height:27.50px;background:#4a4a4a;"></div>
<div class="r" style="left:1228.70px;top:1676.25px;width:72.30px;height:35.50px;background:#4bb3e8;border-radius:6px"></div>
<div class="t" style="left:1241.90px;top:1685.00px;font-size:21.50px;color:#151515;transform:scaleX(0.8540);transform-origin:0 0;">ROIC</div>
<div class="r" style="left:1307.10px;top:1680.00px;width:1.20px;height:27.50px;background:#4a4a4a;"></div>
<div class="r" style="left:1314.00px;top:1676.25px;width:84.80px;height:35.50px;background:#4bb3e8;border-radius:6px"></div>
<div class="t" style="left:1327.20px;top:1685.00px;font-size:21.50px;color:#151515;transform:scaleX(0.9222);transform-origin:0 0;">Charts</div>
<div class="r" style="left:1404.90px;top:1680.00px;width:1.20px;height:27.50px;background:#4a4a4a;"></div>
<div class="r" style="left:1411.80px;top:1676.25px;width:64.10px;height:35.50px;background:#4bb3e8;border-radius:6px"></div>
<div class="t" style="left:1425.00px;top:1685.00px;font-size:21.50px;color:#151515;transform:scaleX(0.8303);transform-origin:0 0;">KPIs</div>
<div class="r" style="left:1482.00px;top:1680.00px;width:1.20px;height:27.50px;background:#4a4a4a;"></div>
<div class="r" style="left:1488.90px;top:1676.25px;width:168.80px;height:35.50px;background:#4bb3e8;border-radius:6px"></div>
<div class="t" style="left:1502.10px;top:1685.00px;font-size:21.50px;color:#151515;transform:scaleX(0.9238);transform-origin:0 0;">Sources &amp; Uses</div>
<div class="r" style="left:1663.80px;top:1680.00px;width:1.20px;height:27.50px;background:#4a4a4a;"></div>
<div class="r" style="left:1670.70px;top:1676.25px;width:83.20px;height:35.50px;background:#4bb3e8;border-radius:6px"></div>
<div class="t" style="left:1683.90px;top:1685.00px;font-size:21.50px;color:#151515;transform:scaleX(0.9320);transform-origin:0 0;">Ratios</div>
<div class="r" style="left:1760.00px;top:1680.00px;width:1.20px;height:27.50px;background:#4a4a4a;"></div>
<div class="r" style="left:1766.90px;top:1676.25px;width:95.80px;height:35.50px;background:#4bb3e8;border-radius:6px"></div>
<div class="t" style="left:1780.10px;top:1685.00px;font-size:21.50px;color:#151515;transform:scaleX(0.9678);transform-origin:0 0;">DuPont</div>
<div class="r" style="left:1868.80px;top:1680.00px;width:1.20px;height:27.50px;background:#4a4a4a;"></div>
<div class="r" style="left:1875.00px;top:1670.00px;width:153.00px;height:41.75px;background:#fff;border-radius:0 0 7px 7px;background:linear-gradient(#ffffff 35%,#cfe6f6)"></div>
<div class="t" style="left:1888.50px;top:1681.00px;font-size:21.50px;color:#1a1a1a;transform:scaleX(0.9496);transform-origin:0 0;">Top_Revenue</div>
<div class="r" style="left:1888.50px;top:1703.80px;width:126.00px;height:2.40px;background:#1e7145;"></div>
<div class="r" style="left:2032.90px;top:1680.00px;width:1.20px;height:27.50px;background:#4a4a4a;"></div>
<div class="r" style="left:2040.00px;top:1676.25px;width:32.00px;height:35.50px;background:#4bb3e8;border-radius:6px 0 0 6px"></div>
<div class="t" style="left:2053.00px;top:1685.00px;font-size:21.50px;color:#151515;transform:scaleX(0.8367);transform-origin:0 0;clip-path:inset(0 0 0 0)">To</div>
<div class="r" style="left:2072.00px;top:1672.00px;width:18.00px;height:44.00px;background:#0a0a0a;"></div>
<div class="r" style="left:2087.00px;top:1690.60px;width:4.20px;height:4.20px;background:#d2d2d2;border-radius:50%"></div>
<div class="r" style="left:2093.30px;top:1690.60px;width:4.20px;height:4.20px;background:#d2d2d2;border-radius:50%"></div>
<div class="r" style="left:2099.60px;top:1690.60px;width:4.20px;height:4.20px;background:#d2d2d2;border-radius:50%"></div>
<svg class="r" style="left:2134.00px;top:1684.00px;" width="18" height="18" viewBox="0 0 18 18"><path d="M9 1 V17 M1 9 H17" stroke="#d2d2d2" stroke-width="1.6"/></svg>
<div class="r" style="left:2190.00px;top:1685.60px;width:3.60px;height:3.60px;background:#d2d2d2;border-radius:50%"></div>
<div class="r" style="left:2190.00px;top:1692.00px;width:3.60px;height:3.60px;background:#d2d2d2;border-radius:50%"></div>
<div class="r" style="left:2190.00px;top:1698.40px;width:3.60px;height:3.60px;background:#d2d2d2;border-radius:50%"></div>
<div class="r" style="left:2216.00px;top:1680.00px;width:643.00px;height:25.00px;background:#171717;border-radius:12.5px"></div>
<div class="r" style="left:2242.00px;top:1687.00px;width:512.00px;height:12.60px;background:#9d9d9d;border-radius:6.3px"></div>
<svg class="r" style="left:2222.00px;top:1685.00px;" width="12" height="16" viewBox="0 0 12 16"><path d="M10.8 2 V14 Q10.8 15.6 9.2 14.8 L1.6 9 Q0.8 8 1.6 7 L9.2 1.2 Q10.8 0.4 10.8 2Z" fill="#9c9c9c"/></svg>
<svg class="r" style="left:2841.00px;top:1685.00px;" width="12" height="16" viewBox="0 0 12 16"><path d="M1.2 2 V14 Q1.2 15.6 2.8 14.8 L10.4 9 Q11.2 8 10.4 7 L2.8 1.2 Q1.2 0.4 1.2 2Z" fill="#9c9c9c"/></svg>
<div class="t" style="left:27.00px;top:1727.00px;font-size:15.30px;color:#e8e8e8;transform:scaleX(0.9610);transform-origin:0 0;">Ready</div>
<svg class="r" style="left:98.00px;top:1725.00px;" width="24" height="21" viewBox="0 0 24 21"><path d="M1 1.5 H21.5 V9 M1 1.5 V18.5 H9" fill="none" stroke="#d2d2d2" stroke-width="1.5"/><path d="M1 5 H21.5 M4 9.3 H9.5 M4 13.3 H8.5" stroke="#d2d2d2" stroke-width="1.4"/><circle cx="15.5" cy="14" r="5.6" fill="none" stroke="#d2d2d2" stroke-width="1.5"/><circle cx="15.5" cy="14" r="2.6" fill="#d2d2d2"/></svg>
<svg class="r" style="left:145.00px;top:1724.00px;" width="24" height="23" viewBox="0 0 24 23"><circle cx="9.8" cy="3.6" r="2.4" fill="none" stroke="#d2d2d2" stroke-width="1.4"/><path d="M1.5 7 Q9.8 10.5 18.5 6.3 M9.8 9 V13 M9.8 13 L4.5 21 M9.8 13 L12.5 16" fill="none" stroke="#d2d2d2" stroke-width="1.5" stroke-linecap="round"/><path d="M13.5 14.5 L21.5 22 M21.5 14.5 L13.5 22" stroke="#d2d2d2" stroke-width="1.5"/></svg>
<div class="t" style="left:173.25px;top:1727.00px;font-size:15.30px;color:#f4f4f4;font-weight:bold;transform:scaleX(1.0256);transform-origin:0 0;">Accessibility: Investigate</div>
<div class="r" style="left:2445.00px;top:1718.40px;width:60.00px;height:32.60px;background:#2b2b2b;"></div>
<svg class="r" style="left:2464.00px;top:1724.00px;" width="22" height="22" viewBox="0 0 22 22"><rect x="1" y="1" width="19.5" height="19.5" fill="none" stroke="#f0f0f0" stroke-width="1.7"/><path d="M7.5 1 V20.5 M14 1 V20.5 M1 7.5 H20.5 M1 14 H20.5" stroke="#f0f0f0" stroke-width="1.6"/></svg>
<svg class="r" style="left:2524.00px;top:1724.00px;" width="22" height="22" viewBox="0 0 22 22"><rect x="1" y="1" width="19.5" height="19.5" fill="none" stroke="#f0f0f0" stroke-width="1.7"/><rect x="5.6" y="5.2" width="10.3" height="11" fill="none" stroke="#f0f0f0" stroke-width="1.5"/><path d="M8.2 8.6 H13.4 M8.2 10.9 H13.4 M8.2 13.2 H13.4" stroke="#f0f0f0" stroke-width="1.1"/></svg>
<svg class="r" style="left:2584.00px;top:1724.00px;" width="22" height="22" viewBox="0 0 22 22"><rect x="1" y="1" width="19.5" height="18.5" fill="none" stroke="#f0f0f0" stroke-width="1.7"/><path d="M1 11.6 H14.2 V1 M6 1 V11.6" fill="none" stroke="#f0f0f0" stroke-width="1.7"/></svg>
<div class="r" style="left:2633.50px;top:1735.00px;width:10.50px;height:1.20px;background:#e8e8e8;"></div>
<div class="r" style="left:2653.00px;top:1735.00px;width:148.00px;height:1.20px;background:#a0a0a0;"></div>
<div class="r" style="left:2726.30px;top:1731.00px;width:1.40px;height:9.00px;background:#a0a0a0;"></div>
<div class="r" style="left:2732.50px;top:1726.00px;width:8.50px;height:17.00px;background:#bdbdbd;border-radius:1.5px"></div>
<svg class="r" style="left:2808.00px;top:1729.00px;" width="12" height="12" viewBox="0 0 12 12"><path d="M6 0.5 V11.5 M0.5 6 H11.5" stroke="#d2d2d2" stroke-width="1.3"/></svg>
<div class="t" style="left:2840.00px;top:1727.00px;font-size:15.30px;color:#f0f0f0;transform:scaleX(0.9890);transform-origin:0 0;">140%</div>
<svg class="r" style="left:35.00px;top:35.00px;" width="24" height="24" viewBox="0 0 24 24"><rect x="5" y="0.5" width="18.5" height="23" rx="2.2" fill="#21a366"/>
<rect x="5" y="0.5" width="9.5" height="6" fill="#33c481"/><rect x="14.5" y="0.5" width="9" height="6" fill="#8ee0a8"/>
<rect x="5" y="6.5" width="9.5" height="6" fill="#107c41"/><rect x="14.5" y="6.5" width="9" height="6" fill="#21a366"/>
<rect x="5" y="12.5" width="18.5" height="11" fill="#185c37"/><rect x="14.5" y="12.5" width="9" height="5.5" fill="#107c41"/>
<rect x="0.5" y="6" width="13" height="13" rx="1.5" fill="#107c41"/>
<path d="M4 9 L10 16 M10 9 L4 16" stroke="#fff" stroke-width="2"/></svg>
<div class="t" style="left:95.00px;top:38.00px;font-size:19.50px;color:#fff;transform:scaleX(0.9034);transform-origin:0 0;">vape-shop.xlsx</div>
<div class="r" style="left:222.50px;top:47.20px;width:5.50px;height:1.40px;background:#ffffff;"></div>
<div class="t" style="left:239.50px;top:38.00px;font-size:19.50px;color:#fff;transform:scaleX(0.8744);transform-origin:0 0;">Read-Only</div>
<svg class="r" style="left:328.10px;top:42.50px;" width="17" height="11" viewBox="0 0 17 11"><path d="M2 2 L8.50 9.00 L15.00 2" fill="none" stroke="#ffffff" stroke-width="1.8" stroke-linecap="round" stroke-linejoin="round"/></svg>
<svg class="r" style="left:2470.00px;top:32.00px;" width="32" height="32" viewBox="0 0 32 32"><circle cx="19" cy="12.5" r="6.3" fill="none" stroke="#ffffff" stroke-width="1.7"/><path d="M14.6 17.2 L6.3 25.6" stroke="#ffffff" stroke-width="1.7" stroke-linecap="round"/></svg>
<svg class="r" style="left:2553.00px;top:29.00px;" width="36" height="36" viewBox="0 0 36 36"><defs><clipPath id="av"><circle cx="18" cy="18" r="18"/></clipPath></defs>
<g clip-path="url(#av)"><rect width="36" height="36" fill="#b7d0dc"/><rect y="12" width="36" height="14" fill="#a9d3d6"/>
<ellipse cx="18.5" cy="17.5" rx="7" ry="9" fill="#c29c8b"/><ellipse cx="18.5" cy="12" rx="6.3" ry="4.2" fill="#c7a697"/>
<path d="M3 36 Q5 26 14 26 L23 26 Q32 26 34 36Z" fill="#d9d3cb"/><rect x="15" y="23" width="7" height="5" fill="#b98f7d"/></g></svg>
<svg class="r" style="left:2628.00px;top:34.00px;" width="26" height="24" viewBox="0 0 26 24"><path d="M7 1.5 H19 L24.5 8.5 L13 22.5 L1.5 8.5 Z M1.5 8.5 H24.5 M7 1.5 L9.5 8.5 L13 22.5 L16.5 8.5 L19 1.5 M13 1.5 L9.5 8.5 M13 1.5 L16.5 8.5" fill="none" stroke="#ffffff" stroke-width="1.5" stroke-linejoin="round"/></svg>
<div class="r" style="left:2703.00px;top:45.00px;width:16.00px;height:1.60px;background:#ffffff;"></div>
<svg class="r" style="left:2773.00px;top:37.00px;" width="20" height="20" viewBox="0 0 20 20"><rect x="2.8" y="5.6" width="11.6" height="11.6" rx="3" fill="none" stroke="#ffffff" stroke-width="1.6"/><path d="M6 2.6 H13.5 Q17.2 2.6 17.2 6.3 V13.6" fill="none" stroke="#ffffff" stroke-width="1.6"/></svg>
<svg class="r" style="left:2845.00px;top:37.00px;" width="20" height="20" viewBox="0 0 20 20"><path d="M2.3 1.8 L17.8 17.4 M17.8 1.8 L2.3 17.4" stroke="#ffffff" stroke-width="1.7"/></svg>
<div class="r" style="left:2621.00px;top:87.00px;width:135.00px;height:36.00px;background:#292929;box-sizing:border-box;border:1px solid #666;border-radius:6px"></div>
<svg class="r" style="left:2628.00px;top:96.00px;" width="19" height="19" viewBox="0 0 19 19"><path d="M1.5 1.8 H16.8 V12.3 H6.3 L2.8 16 V12.3 H1.5 Z" fill="none" stroke="#ffffff" stroke-width="1.5" stroke-linejoin="round"/></svg>
<div class="t" style="left:2652.80px;top:95.00px;font-size:20.00px;color:#fff;transform:scaleX(0.9639);transform-origin:0 0;">Comments</div>
<div class="r" style="left:2768.00px;top:87.00px;width:105.00px;height:36.00px;background:#3ab26b;border-radius:6px"></div>
<svg class="r" style="left:2774.00px;top:95.00px;" width="20" height="20" viewBox="0 0 20 20"><path d="M7 4.5 H3.5 Q1.5 4.5 1.5 6.5 V16 Q1.5 18 3.5 18 H14 Q16 18 16 16 V14" fill="none" stroke="#0a0a0a" stroke-width="1.5"/><path d="M12 1.5 L18.3 7 L12 12.5 V9.3 Q7 9 5 13.5 Q5.3 5.5 12 4.8 Z" fill="none" stroke="#0a0a0a" stroke-width="1.5" stroke-linejoin="round"/></svg>
<div class="t" style="left:2799.80px;top:95.00px;font-size:20.00px;color:#0a0a0a;transform:scaleX(0.8994);transform-origin:0 0;">Share</div>
<svg class="r" style="left:2856.30px;top:100.90px;" width="12" height="8.2" viewBox="0 0 12 8.2"><path d="M2 2 L6.00 6.20 L10.00 2" fill="none" stroke="#0a0a0a" stroke-width="1.8" stroke-linecap="round" stroke-linejoin="round"/></svg>
<div class="t" style="left:42.00px;top:97.00px;font-size:20.50px;color:#fff;transform:scaleX(0.9233);transform-origin:0 0;">File</div>
<div class="t" style="left:111.25px;top:97.00px;font-size:20.50px;color:#fff;font-weight:bold;transform:scaleX(0.9657);transform-origin:0 0;">Home</div>
<div class="t" style="left:198.25px;top:97.00px;font-size:20.50px;color:#fff;transform:scaleX(0.9265);transform-origin:0 0;">Insert</div>
<div class="t" style="left:277.00px;top:97.00px;font-size:20.50px;color:#fff;transform:scaleX(0.9459);transform-origin:0 0;">Draw</div>
<div class="t" style="left:353.00px;top:97.00px;font-size:20.50px;color:#fff;transform:scaleX(0.9186);transform-origin:0 0;">Page Layout</div>
<div class="t" style="left:491.25px;top:97.00px;font-size:20.50px;color:#fff;transform:scaleX(0.9364);transform-origin:0 0;">Formulas</div>
<div class="t" style="left:600.00px;top:97.00px;font-size:20.50px;color:#fff;transform:scaleX(0.9237);transform-origin:0 0;">Data</div>
<div class="t" style="left:671.40px;top:97.00px;font-size:20.50px;color:#fff;transform:scaleX(0.8926);transform-origin:0 0;">Review</div>
<div class="t" style="left:761.50px;top:97.00px;font-size:20.50px;color:#fff;transform:scaleX(0.9486);transform-origin:0 0;">View</div>
<div class="t" style="left:834.00px;top:97.00px;font-size:20.50px;color:#fff;transform:scaleX(0.9915);transform-origin:0 0;">Automate</div>
<div class="t" style="left:951.00px;top:97.00px;font-size:20.50px;color:#fff;transform:scaleX(0.9677);transform-origin:0 0;">Help</div>
<div class="r" style="left:111.25px;top:119.75px;width:57.75px;height:3.00px;background:#4fb47c;border-radius:1.5px"></div>
<div class="r" style="left:23.00px;top:128.00px;width:2856.00px;height:150.00px;background:#292929;border-radius:12px"></div>
<div class="r" style="left:281.90px;top:135.00px;width:1.20px;height:133.75px;background:#4f4f4f;"></div>
<div class="r" style="left:633.15px;top:135.00px;width:1.20px;height:133.75px;background:#4f4f4f;"></div>
<div class="r" style="left:1083.00px;top:135.00px;width:1.20px;height:133.75px;background:#4f4f4f;"></div>
<div class="r" style="left:1324.90px;top:135.00px;width:1.20px;height:133.75px;background:#4f4f4f;"></div>
<div class="r" style="left:1543.90px;top:135.00px;width:1.20px;height:133.75px;background:#4f4f4f;"></div>
<div class="r" style="left:1867.65px;top:135.00px;width:1.20px;height:133.75px;background:#4f4f4f;"></div>
<div class="r" style="left:1962.90px;top:135.00px;width:1.20px;height:133.75px;background:#4f4f4f;"></div>
<div class="r" style="left:2055.65px;top:135.00px;width:1.20px;height:133.75px;background:#4f4f4f;"></div>
<div class="t" style="left:109.00px;top:255.00px;font-size:16.60px;color:#f0f0f0;transform:scaleX(0.9570);transform-origin:0 0;">Clipboard</div>
<div class="t" style="left:430.00px;top:255.00px;font-size:16.60px;color:#f0f0f0;transform:scaleX(0.9408);transform-origin:0 0;">Font</div>
<div class="t" style="left:810.50px;top:255.00px;font-size:16.60px;color:#f0f0f0;transform:scaleX(0.9652);transform-origin:0 0;">Alignment</div>
<div class="t" style="left:1163.25px;top:255.00px;font-size:16.60px;color:#f0f0f0;transform:scaleX(0.9697);transform-origin:0 0;">Number</div>
<div class="t" style="left:1418.00px;top:255.00px;font-size:16.60px;color:#f0f0f0;transform:scaleX(0.8673);transform-origin:0 0;">Cells</div>
<div class="t" style="left:1682.50px;top:255.00px;font-size:16.60px;color:#f0f0f0;transform:scaleX(0.9358);transform-origin:0 0;">Editing</div>
<div class="t" style="left:1888.25px;top:255.00px;font-size:16.60px;color:#f0f0f0;transform:scaleX(0.9416);transform-origin:0 0;">Add-ins</div>
<svg class="r" style="left:265.00px;top:257.00px;" width="12" height="12" viewBox="0 0 12 12"><path d="M0.8 8.5 V0.8 H8.5" fill="none" stroke="#d2d2d2" stroke-width="1.5"/><path d="M4.2 4.2 L11 11 M11 5.8 V11.2 H5.8" fill="none" stroke="#d2d2d2" stroke-width="1.5"/></svg>
<svg class="r" style="left:616.20px;top:257.00px;" width="12" height="12" viewBox="0 0 12 12"><path d="M0.8 8.5 V0.8 H8.5" fill="none" stroke="#d2d2d2" stroke-width="1.5"/><path d="M4.2 4.2 L11 11 M11 5.8 V11.2 H5.8" fill="none" stroke="#d2d2d2" stroke-width="1.5"/></svg>
<svg class="r" style="left:1066.20px;top:257.00px;" width="12" height="12" viewBox="0 0 12 12"><path d="M0.8 8.5 V0.8 H8.5" fill="none" stroke="#d2d2d2" stroke-width="1.5"/><path d="M4.2 4.2 L11 11 M11 5.8 V11.2 H5.8" fill="none" stroke="#d2d2d2" stroke-width="1.5"/></svg>
<svg class="r" style="left:1308.00px;top:257.00px;" width="12" height="12" viewBox="0 0 12 12"><path d="M0.8 8.5 V0.8 H8.5" fill="none" stroke="#d2d2d2" stroke-width="1.5"/><path d="M4.2 4.2 L11 11 M11 5.8 V11.2 H5.8" fill="none" stroke="#d2d2d2" stroke-width="1.5"/></svg>
<svg class="r" style="left:54.00px;top:140.00px;" width="44" height="48" viewBox="0 0 44 48"><path d="M8.8 8.4 H2.8 V42.4 H20" fill="none" stroke="#8c8c8c" stroke-width="2.7"/>
<path d="M26 8.4 H31.9 V19" fill="none" stroke="#8c8c8c" stroke-width="2.7"/>
<rect x="9.3" y="7.6" width="16.2" height="5" fill="none" stroke="#8c8c8c" stroke-width="1.5"/>
<path d="M13.2 7.6 Q13.2 1.6 17.4 1.6 Q21.6 1.6 21.6 7.6" fill="none" stroke="#8c8c8c" stroke-width="1.6"/>
<rect x="21.9" y="20.6" width="19.6" height="25" fill="#292929" stroke="#a6a6a6" stroke-width="1.8"/></svg>
<div class="t" style="left:51.75px;top:195.00px;font-size:18.50px;color:#6e6e6e;transform:scaleX(0.8519);transform-origin:0 0;">Paste</div>
<svg class="r" style="left:65.55px;top:222.40px;" width="11.5" height="8.2" viewBox="0 0 11.5 8.2"><path d="M2 2 L5.75 6.20 L9.50 2" fill="none" stroke="#6e6e6e" stroke-width="1.8" stroke-linecap="round" stroke-linejoin="round"/></svg>
<svg class="r" style="left:114.00px;top:140.00px;" width="20" height="26" viewBox="0 0 20 26"><path d="M5 1 L13.5 17 M15 1 L6.5 17" stroke="#d2d2d2" stroke-width="1.6" stroke-linecap="round"/><circle cx="4.8" cy="20.3" r="3" fill="none" stroke="#3f9ae0" stroke-width="1.6"/><circle cx="15.2" cy="20.3" r="3" fill="none" stroke="#3f9ae0" stroke-width="1.6"/></svg>
<div class="t" style="left:142.00px;top:143.00px;font-size:19.30px;color:#fff;transform:scaleX(0.8990);transform-origin:0 0;">Cut</div>
<svg class="r" style="left:111.00px;top:178.00px;" width="26" height="26" viewBox="0 0 26 26"><path d="M8 17 H1.3 V1.5 H10.5 L14 5" fill="none" stroke="#d2d2d2" stroke-width="1.6"/><path d="M10.2 7.3 H18.5 L24 12.8 V24 H10.2 Z" fill="#292929" stroke="#d2d2d2" stroke-width="1.6" stroke-linejoin="round"/><path d="M18.2 7.5 V13 H23.8 M13.5 16.5 H20.8 M13.5 20 H20.8" fill="none" stroke="#d2d2d2" stroke-width="1.4"/></svg>
<div class="t" style="left:142.00px;top:182.00px;font-size:19.30px;color:#fff;transform:scaleX(0.9266);transform-origin:0 0;">Copy</div>
<svg class="r" style="left:209.40px;top:187.55px;" width="11.4" height="7.9" viewBox="0 0 11.4 7.9"><path d="M2 2 L5.70 5.90 L9.40 2" fill="none" stroke="#ffffff" stroke-width="1.8" stroke-linecap="round" stroke-linejoin="round"/></svg>
<svg class="r" style="left:112.00px;top:217.00px;" width="26" height="25" viewBox="0 0 26 25"><path d="M15 9.5 L21.5 2.5 Q23.5 0.8 25 2.5 Q26 4.3 24.3 5.8 L17.5 12" fill="none" stroke="#d2d2d2" stroke-width="1.6"/><path d="M11.5 7.5 L19.5 14.5 L17 17.5 L9 10.5 Z" fill="none" stroke="#d2d2d2" stroke-width="1.5" stroke-linejoin="round"/><path d="M8.5 11 L16.5 18 Q13 23 8 23.5 Q3 20 1 14.5 Q5 14 8.5 11Z" fill="#f0a83c" stroke="#f0b050" stroke-width="1.2" stroke-linejoin="round"/></svg>
<div class="t" style="left:142.50px;top:221.00px;font-size:19.30px;color:#fff;transform:scaleX(0.8971);transform-origin:0 0;">Format Painter</div>
<div class="r" style="left:295.00px;top:146.25px;width:180.50px;height:35.50px;background:#292929;box-sizing:border-box;border:1px solid #666;border-radius:5px"></div>
<div class="t" style="left:298.00px;top:155.00px;font-size:19.30px;color:#fff;transform:scaleX(0.9212);transform-origin:0 0;">Tahoma</div>
<svg class="r" style="left:461.30px;top:160.65px;" width="11.4" height="7.9" viewBox="0 0 11.4 7.9"><path d="M2 2 L5.70 5.90 L9.40 2" fill="none" stroke="#ffffff" stroke-width="1.8" stroke-linecap="round" stroke-linejoin="round"/></svg>
<div class="r" style="left:479.50px;top:146.25px;width:64.25px;height:35.50px;background:#292929;box-sizing:border-box;border:1px solid #666;border-radius:5px"></div>
<div class="t" style="left:482.50px;top:155.00px;font-size:19.30px;color:#fff;">8</div>
<svg class="r" style="left:529.30px;top:160.65px;" width="11.4" height="7.9" viewBox="0 0 11.4 7.9"><path d="M2 2 L5.70 5.90 L9.40 2" fill="none" stroke="#ffffff" stroke-width="1.8" stroke-linecap="round" stroke-linejoin="round"/></svg>
<div class="t" style="left:554.50px;top:149.00px;font-size:27.00px;color:#d2d2d2;transform:scaleX(0.9717);transform-origin:0 0;">A</div>
<svg class="r" style="left:569.00px;top:152.00px;" width="10" height="7" viewBox="0 0 10 7"><path d="M1.5 5.5 L5 1.8 L8.5 5.5" fill="none" stroke="#3f9ae0" stroke-width="1.7"/></svg>
<div class="t" style="left:595.50px;top:153.00px;font-size:21.00px;color:#d2d2d2;">A</div>
<svg class="r" style="left:607.50px;top:152.50px;" width="10" height="7" viewBox="0 0 10 7"><path d="M1.5 1.5 L5 5.2 L8.5 1.5" fill="none" stroke="#3f9ae0" stroke-width="1.7"/></svg>
<div class="t" style="left:307.50px;top:200.00px;font-size:21.00px;color:#d2d2d2;font-weight:bold;transform:scaleX(0.7583);transform-origin:0 0;">B</div>
<div class="t" style="left:348px;top:201.34px;font-family:'Liberation Serif',serif;font-style:italic;font-size:21.5px;color:#d2d2d2">I</div>
<div class="t" style="left:383.75px;top:199.00px;font-size:20.50px;color:#d2d2d2;transform:scaleX(0.8781);transform-origin:0 0;">U</div>
<div class="r" style="left:383.50px;top:219.80px;width:13.50px;height:1.50px;background:#d2d2d2;"></div>
<svg class="r" style="left:413.50px;top:208.85px;" width="11.4" height="7.9" viewBox="0 0 11.4 7.9"><path d="M2 2 L5.70 5.90 L9.40 2" fill="none" stroke="#ffffff" stroke-width="1.8" stroke-linecap="round" stroke-linejoin="round"/></svg>
<div class="r" style="left:433.90px;top:193.75px;width:1.20px;height:35.75px;background:#4f4f4f;"></div>
<svg class="r" style="left:443.00px;top:199.00px;" width="25" height="25" viewBox="0 0 25 25"><path d="M1.5 1.5 H23.5 V21 M1.5 1.5 V21 M12.5 1.5 V21 M1.5 11.2 H23.5" fill="none" stroke="#d2d2d2" stroke-width="1.5" stroke-dasharray="1.6 1.9"/><path d="M1 22.8 H24" stroke="#d2d2d2" stroke-width="1.8"/></svg>
<svg class="r" style="left:478.70px;top:208.85px;" width="11.4" height="7.9" viewBox="0 0 11.4 7.9"><path d="M2 2 L5.70 5.90 L9.40 2" fill="none" stroke="#ffffff" stroke-width="1.8" stroke-linecap="round" stroke-linejoin="round"/></svg>
<div class="r" style="left:498.65px;top:193.75px;width:1.20px;height:35.75px;background:#4f4f4f;"></div>
<svg class="r" style="left:509.00px;top:198.00px;" width="26" height="20" viewBox="0 0 26 20"><path d="M9 3.2 L18.5 12.3 L11.5 18.2 L3.3 10.6 Z" fill="none" stroke="#d2d2d2" stroke-width="1.5" stroke-linejoin="round"/><path d="M9 3.2 Q9 0.8 11.3 0.8 Q13.3 0.8 13.3 3.2 V8" fill="none" stroke="#d2d2d2" stroke-width="1.4"/><path d="M19.5 7 Q23 11 21 15.5 Q19.2 13.5 17.5 12.5" fill="#3f9ae0" stroke="#3f9ae0" stroke-width="1"/></svg>
<div class="r" style="left:508.75px;top:218.25px;width:24.25px;height:5.50px;background:#ffeb1a;"></div>
<svg class="r" style="left:543.70px;top:208.85px;" width="11.4" height="7.9" viewBox="0 0 11.4 7.9"><path d="M2 2 L5.70 5.90 L9.40 2" fill="none" stroke="#ffffff" stroke-width="1.8" stroke-linecap="round" stroke-linejoin="round"/></svg>
<div class="t" style="left:574.30px;top:198.00px;font-size:22.50px;color:#d2d2d2;transform:scaleX(1.0328);transform-origin:0 0;">A</div>
<div class="r" style="left:569.70px;top:218.25px;width:24.50px;height:5.50px;background:#f2141e;"></div>
<svg class="r" style="left:604.40px;top:208.85px;" width="11.4" height="7.9" viewBox="0 0 11.4 7.9"><path d="M2 2 L5.70 5.90 L9.40 2" fill="none" stroke="#ffffff" stroke-width="1.8" stroke-linecap="round" stroke-linejoin="round"/></svg>
<div class="r" style="left:653.00px;top:152.00px;width:22.00px;height:1.70px;background:#d2d2d2;"></div>
<div class="r" style="left:657.18px;top:158.00px;width:13.64px;height:1.70px;background:#d2d2d2;"></div>
<div class="r" style="left:653.00px;top:164.00px;width:22.00px;height:1.70px;background:#d2d2d2;"></div>
<div class="r" style="left:685.00px;top:146.25px;width:35.50px;height:35.25px;background:#3d3d3d;box-sizing:border-box;border:1px solid #707070;border-radius:6px"></div>
<div class="r" style="left:692.00px;top:157.00px;width:22.00px;height:1.70px;background:#d2d2d2;"></div>
<div class="r" style="left:696.18px;top:163.00px;width:13.64px;height:1.70px;background:#d2d2d2;"></div>
<div class="r" style="left:692.00px;top:169.00px;width:22.00px;height:1.70px;background:#d2d2d2;"></div>
<div class="r" style="left:731.00px;top:162.00px;width:22.00px;height:1.70px;background:#d2d2d2;"></div>
<div class="r" style="left:735.18px;top:168.00px;width:13.64px;height:1.70px;background:#d2d2d2;"></div>
<div class="r" style="left:731.00px;top:175.00px;width:22.00px;height:1.70px;background:#d2d2d2;"></div>
<div class="r" style="left:762.65px;top:146.25px;width:1.20px;height:35.25px;background:#4f4f4f;"></div>
<svg class="r" style="left:771.00px;top:150.00px;" width="29" height="26" viewBox="0 0 29 26"><path d="M12 24.5 L24.5 7 M17.8 7 H24.6 V14" fill="none" stroke="#3f9ae0" stroke-width="1.7"/><text x="0" y="0" transform="translate(6,17.5) rotate(-52)" font-family="Liberation Sans" font-size="15.5" fill="#d2d2d2">ab</text></svg>
<svg class="r" style="left:804.40px;top:160.45px;" width="11.4" height="7.9" viewBox="0 0 11.4 7.9"><path d="M2 2 L5.70 5.90 L9.40 2" fill="none" stroke="#ffffff" stroke-width="1.8" stroke-linecap="round" stroke-linejoin="round"/></svg>
<div class="r" style="left:653.00px;top:201.00px;width:22.00px;height:1.70px;background:#d2d2d2;"></div>
<div class="r" style="left:653.00px;top:207.00px;width:13.64px;height:1.70px;background:#d2d2d2;"></div>
<div class="r" style="left:653.00px;top:213.00px;width:22.00px;height:1.70px;background:#d2d2d2;"></div>
<div class="r" style="left:653.00px;top:219.00px;width:13.64px;height:1.70px;background:#d2d2d2;"></div>
<div class="r" style="left:692.00px;top:201.00px;width:22.00px;height:1.70px;background:#d2d2d2;"></div>
<div class="r" style="left:696.18px;top:207.00px;width:13.64px;height:1.70px;background:#d2d2d2;"></div>
<div class="r" style="left:692.00px;top:213.00px;width:22.00px;height:1.70px;background:#d2d2d2;"></div>
<div class="r" style="left:696.18px;top:219.00px;width:13.64px;height:1.70px;background:#d2d2d2;"></div>
<div class="r" style="left:731.00px;top:201.00px;width:22.00px;height:1.70px;background:#d2d2d2;"></div>
<div class="r" style="left:739.36px;top:207.00px;width:13.64px;height:1.70px;background:#d2d2d2;"></div>
<div class="r" style="left:731.00px;top:213.00px;width:22.00px;height:1.70px;background:#d2d2d2;"></div>
<div class="r" style="left:739.36px;top:219.00px;width:13.64px;height:1.70px;background:#d2d2d2;"></div>
<div class="r" style="left:762.65px;top:194.50px;width:1.20px;height:35.50px;background:#4f4f4f;"></div>
<div class="r" style="left:773.75px;top:201.00px;width:22.25px;height:1.70px;background:#d2d2d2;"></div>
<div class="r" style="left:773.75px;top:219.00px;width:22.25px;height:1.70px;background:#d2d2d2;"></div>
<div class="r" style="left:784.50px;top:207.00px;width:11.50px;height:1.70px;background:#d2d2d2;"></div>
<div class="r" style="left:784.50px;top:213.00px;width:11.50px;height:1.70px;background:#d2d2d2;"></div>
<svg class="r" style="left:772.50px;top:206.00px;" width="12" height="11" viewBox="0 0 12 11"><path d="M10.5 5.2 H2 M5.3 1.6 L1.7 5.2 L5.3 8.8" fill="none" stroke="#3f9ae0" stroke-width="1.6"/></svg>
<div class="r" style="left:813.00px;top:201.00px;width:22.00px;height:1.70px;background:#d2d2d2;"></div>
<div class="r" style="left:813.00px;top:219.00px;width:22.00px;height:1.70px;background:#d2d2d2;"></div>
<div class="r" style="left:824.50px;top:207.00px;width:10.50px;height:1.70px;background:#d2d2d2;"></div>
<div class="r" style="left:824.50px;top:213.00px;width:10.50px;height:1.70px;background:#d2d2d2;"></div>
<svg class="r" style="left:812.00px;top:206.00px;" width="12" height="11" viewBox="0 0 12 11"><path d="M1 5.2 H9.5 M6.2 1.6 L9.8 5.2 L6.2 8.8" fill="none" stroke="#3f9ae0" stroke-width="1.6"/></svg>
<div class="r" style="left:850.65px;top:144.25px;width:1.20px;height:93.25px;background:#4f4f4f;"></div>
<div class="t" style="left:870.50px;top:153.00px;font-size:13.50px;color:#d2d2d2;">ab</div>
<div class="t" style="left:870.50px;top:163.00px;font-size:13.50px;color:#d2d2d2;">c</div>
<svg class="r" style="left:877.00px;top:160.00px;" width="16" height="17" viewBox="0 0 16 17"><path d="M6 3.2 H11 Q14.3 3.2 14.3 7.3 Q14.3 11.5 11 11.5 H3 M6.3 7.8 L2.5 11.5 L6.3 15.2" fill="none" stroke="#3f9ae0" stroke-width="1.7"/></svg>
<div class="t" style="left:897.50px;top:155.00px;font-size:19.30px;color:#fff;transform:scaleX(0.8994);transform-origin:0 0;">Wrap Text</div>
<svg class="r" style="left:866.50px;top:200.00px;" width="24.5" height="23.5" viewBox="0 0 24.5 23.5"><rect x="0.9" y="0.9" width="22.5" height="21.5" fill="none" stroke="#d2d2d2" stroke-width="1.5"/><path d="M12.2 0.9 V5 M12.2 18 V22.4" stroke="#d2d2d2" stroke-width="1.5"/><rect x="0.9" y="5" width="22.5" height="13" fill="none" stroke="#3f9ae0" stroke-width="1.7"/><path d="M4.5 11.5 H20 M7.5 8.3 L4.3 11.5 L7.5 14.7 M17 8.3 L20.2 11.5 L17 14.7" fill="none" stroke="#3f9ae0" stroke-width="1.6"/></svg>
<div class="t" style="left:897.50px;top:203.00px;font-size:19.30px;color:#fff;transform:scaleX(0.9212);transform-origin:0 0;">Merge &amp; Center</div>
<svg class="r" style="left:1048.80px;top:208.85px;" width="11.4" height="7.9" viewBox="0 0 11.4 7.9"><path d="M2 2 L5.70 5.90 L9.40 2" fill="none" stroke="#ffffff" stroke-width="1.8" stroke-linecap="round" stroke-linejoin="round"/></svg>
<div class="r" style="left:1096.25px;top:146.25px;width:217.50px;height:35.00px;background:#292929;box-sizing:border-box;border:1px solid #666;border-radius:6px"></div>
<div class="t" style="left:1099.50px;top:155.00px;font-size:19.30px;color:#fff;transform:scaleX(0.8520);transform-origin:0 0;">General</div>
<svg class="r" style="left:1299.30px;top:160.45px;" width="11.4" height="7.9" viewBox="0 0 11.4 7.9"><path d="M2 2 L5.70 5.90 L9.40 2" fill="none" stroke="#ffffff" stroke-width="1.8" stroke-linecap="round" stroke-linejoin="round"/></svg>
<div class="t" style="left:1107.00px;top:199.00px;font-size:25.50px;color:#d2d2d2;transform:scaleX(0.8320);transform-origin:0 0;">$</div>
<svg class="r" style="left:1136.50px;top:208.55px;" width="11.4" height="7.9" viewBox="0 0 11.4 7.9"><path d="M2 2 L5.70 5.90 L9.40 2" fill="none" stroke="#ffffff" stroke-width="1.8" stroke-linecap="round" stroke-linejoin="round"/></svg>
<div class="t" style="left:1163.75px;top:200.00px;font-size:27.00px;color:#d2d2d2;transform:scaleX(0.9372);transform-origin:0 0;">%</div>
<svg class="r" style="left:1207.00px;top:203.00px;" width="14" height="19" viewBox="0 0 14 19"><path d="M6.8 0.8 Q12.3 0.8 12.3 7 Q12.3 14.5 4 17.8 L3.2 16 Q8 13 7.8 9.5 Q2 10 1.5 5.5 Q1.5 0.8 6.8 0.8Z" fill="#d2d2d2"/></svg>
<div class="r" style="left:1234.90px;top:194.25px;width:1.20px;height:35.75px;background:#4f4f4f;"></div>
<svg class="r" style="left:1245.00px;top:205.00px;" width="10" height="9" viewBox="0 0 10 9"><path d="M9.5 4.3 H1.5 M4.8 1 L1.3 4.3 L4.8 7.6" fill="none" stroke="#3f9ae0" stroke-width="1.6"/></svg>
<div class="t" style="left:1260.50px;top:200.00px;font-size:12.50px;color:#d2d2d2;">0</div>
<div class="t" style="left:1248.50px;top:212.00px;font-size:12.50px;color:#d2d2d2;transform:scaleX(1.0934);transform-origin:0 0;">.00</div>
<div class="t" style="left:1287.50px;top:200.00px;font-size:12.50px;color:#d2d2d2;transform:scaleX(1.0934);transform-origin:0 0;">.00</div>
<div class="t" style="left:1296.00px;top:212.00px;font-size:12.50px;color:#d2d2d2;transform:scaleX(1.0552);transform-origin:0 0;">.0</div>
<svg class="r" style="left:1283.50px;top:213.50px;" width="12" height="9" viewBox="0 0 12 9"><path d="M0.5 4.3 H9.5 M6.2 1 L9.7 4.3 L6.2 7.6" fill="none" stroke="#3f9ae0" stroke-width="1.6"/></svg>
<svg class="r" style="left:1343.00px;top:138.00px;" width="52" height="42" viewBox="0 0 52 42"><g transform="translate(5.1,7.25)"><rect x="0.9" y="0.9" width="40.1" height="31.099999999999998" fill="none" stroke="#d2d2d2" stroke-width="1.6"/><path d="M14.0 1 V31.9 M27.9 1 V31.9 M1 11.0 H40.9 M1 21.9 H40.9" stroke="#d2d2d2" stroke-width="1.4"/></g><rect x="12.6" y="17.6" width="37.3" height="12.2" fill="#4aa0e6"/><rect x="23.2" y="19" width="25.5" height="9.4" fill="#0f6cbd"/><rect x="12.4" y="19" width="10.8" height="9.4" fill="#292929"/><path d="M35.8 19 V28.4" stroke="#4aa0e6" stroke-width="1.3"/><path d="M22 23.7 H3.5 M12.8 13.7 L2.8 23.7 L12.8 33.7" fill="none" stroke="#4aa0e6" stroke-width="2"/></svg>
<div class="t" style="left:1347.50px;top:194.00px;font-size:19.30px;color:#fff;transform:scaleX(0.8960);transform-origin:0 0;">Insert</div>
<svg class="r" style="left:1362.70px;top:223.05px;" width="11.4" height="7.9" viewBox="0 0 11.4 7.9"><path d="M2 2 L5.70 5.90 L9.40 2" fill="none" stroke="#ffffff" stroke-width="1.8" stroke-linecap="round" stroke-linejoin="round"/></svg>
<svg class="r" style="left:1411.00px;top:138.00px;" width="50" height="42" viewBox="0 0 50 42"><g transform="translate(2.1,7.25)"><rect x="0.9" y="0.9" width="39.900000000000006" height="31.099999999999998" fill="none" stroke="#d2d2d2" stroke-width="1.6"/><path d="M13.9 1 V31.9 M27.8 1 V31.9 M1 11.0 H40.7 M1 21.9 H40.7" stroke="#d2d2d2" stroke-width="1.4"/></g><path d="M7.75 17.6 H29 L34.6 23.7 L29 29.8 H7.75 Z" fill="#4aa0e6"/><path d="M9 19 H28.4 L32.8 23.7 L28.4 28.4 H9 Z" fill="#0f6cbd"/><path d="M22.7 19 V28.4" stroke="#4aa0e6" stroke-width="1.3"/><path d="M29.5 16 L45.6 33.6 M45.6 16 L29.5 33.6" stroke="#e8514a" stroke-width="2"/></svg>
<div class="t" style="left:1410.00px;top:194.00px;font-size:19.30px;color:#fff;transform:scaleX(0.8738);transform-origin:0 0;">Delete</div>
<svg class="r" style="left:1427.60px;top:223.05px;" width="11.4" height="7.9" viewBox="0 0 11.4 7.9"><path d="M2 2 L5.70 5.90 L9.40 2" fill="none" stroke="#ffffff" stroke-width="1.8" stroke-linecap="round" stroke-linejoin="round"/></svg>
<svg class="r" style="left:1477.00px;top:136.00px;" width="46" height="44" viewBox="0 0 46 44"><rect x="3.2" y="10.05" width="39.6" height="31.2" fill="none" stroke="#d2d2d2" stroke-width="1.6"/><path d="M13 10 V41.3 M33.6 10 V41.3 M3 20.9 H43 M3 31.1 H43" stroke="#d2d2d2" stroke-width="1.4"/><rect x="13" y="20.9" width="20.6" height="10.2" fill="#0f6cbd" stroke="#4aa0e6" stroke-width="1.3"/><path d="M11.1 4.3 H34.9 M11.1 2.1 V6.5 M34.9 2.1 V6.5" stroke="#4aa0e6" stroke-width="1.5"/></svg>
<div class="t" style="left:1472.50px;top:192.00px;font-size:19.30px;color:#fff;transform:scaleX(0.9203);transform-origin:0 0;">Format</div>
<svg class="r" style="left:1493.60px;top:220.65px;" width="11.4" height="7.9" viewBox="0 0 11.4 7.9"><path d="M2 2 L5.70 5.90 L9.40 2" fill="none" stroke="#ffffff" stroke-width="1.8" stroke-linecap="round" stroke-linejoin="round"/></svg>
<svg class="r" style="left:1565.00px;top:141.00px;" width="19" height="23" viewBox="0 0 19 23"><path d="M16.5 5 V1.5 H1.8 L9.5 11 L1.8 20.8 H16.5 V17.3" fill="none" stroke="#d2d2d2" stroke-width="1.6" stroke-linejoin="miter"/></svg>
<div class="t" style="left:1593.25px;top:143.00px;font-size:19.30px;color:#fff;transform:scaleX(0.9195);transform-origin:0 0;">AutoSum</div>
<svg class="r" style="left:1693.70px;top:148.55px;" width="11.4" height="7.9" viewBox="0 0 11.4 7.9"><path d="M2 2 L5.70 5.90 L9.40 2" fill="none" stroke="#ffffff" stroke-width="1.8" stroke-linecap="round" stroke-linejoin="round"/></svg>
<svg class="r" style="left:1562.50px;top:180.00px;" width="25" height="22" viewBox="0 0 25 22"><path d="M1 1.2 H24" stroke="#d2d2d2" stroke-width="1.5"/><rect x="1.6" y="4" width="21.8" height="16.8" fill="none" stroke="#d2d2d2" stroke-width="1.5"/><path d="M12.5 7 V17 M8.3 13 L12.5 17.2 L16.7 13" fill="none" stroke="#3f9ae0" stroke-width="1.7"/></svg>
<div class="t" style="left:1593.75px;top:182.00px;font-size:19.30px;color:#fff;transform:scaleX(0.8113);transform-origin:0 0;">Fill</div>
<svg class="r" style="left:1618.70px;top:186.25px;" width="11.4" height="7.9" viewBox="0 0 11.4 7.9"><path d="M2 2 L5.70 5.90 L9.40 2" fill="none" stroke="#ffffff" stroke-width="1.8" stroke-linecap="round" stroke-linejoin="round"/></svg>
<svg class="r" style="left:1562.00px;top:218.00px;" width="25" height="24" viewBox="0 0 25 24"><path d="M14.5 1.5 L23 9 L9.5 22.2 L1.5 14.5 Z" fill="none" stroke="#d084d8" stroke-width="1.6" stroke-linejoin="round"/><path d="M7 9.2 L15 17 L9.5 22.2 L1.5 14.5 Z" fill="#b84cc4" stroke="#d084d8" stroke-width="1.2" stroke-linejoin="round"/></svg>
<div class="t" style="left:1593.25px;top:220.00px;font-size:19.30px;color:#fff;transform:scaleX(0.8348);transform-origin:0 0;">Clear</div>
<svg class="r" style="left:1636.70px;top:225.85px;" width="11.4" height="7.9" viewBox="0 0 11.4 7.9"><path d="M2 2 L5.70 5.90 L9.40 2" fill="none" stroke="#ffffff" stroke-width="1.8" stroke-linecap="round" stroke-linejoin="round"/></svg>
<div class="t" style="left:1730.00px;top:141.00px;font-size:23.50px;color:#3f9ae0;transform:scaleX(0.9570);transform-origin:0 0;">A</div>
<div class="t" style="left:1730.00px;top:162.00px;font-size:23.50px;color:#d2d2d2;transform:scaleX(0.9613);transform-origin:0 0;">Z</div>
<svg class="r" style="left:1748.00px;top:150.00px;" width="25" height="27" viewBox="0 0 25 27"><path d="M1.2 1.6 H23.6 L15 11.5 V24.5 H9.8 V11.5 Z" fill="none" stroke="#d2d2d2" stroke-width="1.6" stroke-linejoin="round"/></svg>
<div class="t" style="left:1725.00px;top:192.00px;font-size:19.30px;color:#fff;transform:scaleX(0.9696);transform-origin:0 0;">Sort &amp;</div>
<div class="t" style="left:1725.00px;top:216.00px;font-size:19.30px;color:#fff;transform:scaleX(0.8627);transform-origin:0 0;">Filter</div>
<svg class="r" style="left:1766.70px;top:219.85px;" width="11.4" height="7.9" viewBox="0 0 11.4 7.9"><path d="M2 2 L5.70 5.90 L9.40 2" fill="none" stroke="#ffffff" stroke-width="1.8" stroke-linecap="round" stroke-linejoin="round"/></svg>
<svg class="r" style="left:1796.00px;top:139.00px;" width="48" height="47" viewBox="0 0 48 47"><circle cx="30.2" cy="18" r="15.2" fill="none" stroke="#d2d2d2" stroke-width="1.7"/><path d="M19.5 29 L3 44.5" stroke="#d2d2d2" stroke-width="1.8" stroke-linecap="round"/></svg>
<div class="t" style="left:1795.00px;top:192.00px;font-size:19.30px;color:#fff;transform:scaleX(0.9502);transform-origin:0 0;">Find &amp;</div>
<div class="t" style="left:1790.50px;top:216.00px;font-size:19.30px;color:#fff;transform:scaleX(0.8436);transform-origin:0 0;">Select</div>
<svg class="r" style="left:1840.60px;top:219.85px;" width="11.4" height="7.9" viewBox="0 0 11.4 7.9"><path d="M2 2 L5.70 5.90 L9.40 2" fill="none" stroke="#ffffff" stroke-width="1.8" stroke-linecap="round" stroke-linejoin="round"/></svg>
<svg class="r" style="left:1894.00px;top:140.00px;" width="44" height="44" viewBox="0 0 44 44"><rect x="1" y="1" width="42" height="42" fill="#7a3218" stroke="#d0532a" stroke-width="1.8"/><rect x="6" y="6" width="13" height="13" fill="#292929" stroke="#d0532a" stroke-width="1.6"/><rect x="6" y="25" width="13" height="13" fill="#292929" stroke="#d0532a" stroke-width="1.6"/><rect x="25" y="6" width="13" height="13" fill="#292929" stroke="#d0532a" stroke-width="1.6"/><rect x="25" y="25" width="13" height="13" fill="#292929" stroke="#d0532a" stroke-width="1.6"/></svg>
<div class="t" style="left:1885.50px;top:192.00px;font-size:19.30px;color:#fff;transform:scaleX(0.9474);transform-origin:0 0;">Add-ins</div>
<svg class="r" style="left:1989.00px;top:141.00px;" width="42" height="42" viewBox="0 0 42 42"><rect x="0.9" y="0.9" width="40" height="40" fill="none" stroke="#d2d2d2" stroke-width="1.6"/><rect x="1" y="1" width="40" height="6" fill="#8a8a8a"/><path d="M1 18 H41 M1 29.5 H41 M14 30 V41 M27.5 30 V41" stroke="#d2d2d2" stroke-width="1.3"/><circle cx="19.5" cy="18" r="12.5" fill="#292929" stroke="#d2d2d2" stroke-width="1.7"/><rect x="12.5" y="17" width="4" height="7" fill="#8a8a8a"/><rect x="17.5" y="11" width="4" height="13" fill="#8a8a8a"/><rect x="23" y="14" width="4" height="10" fill="#3f9ae0"/><path d="M28.5 27 L41 40.5" stroke="#d2d2d2" stroke-width="2.6"/></svg>
<div class="t" style="left:1980.00px;top:192.00px;font-size:19.30px;color:#fff;transform:scaleX(0.8920);transform-origin:0 0;">Analyze</div>
<div class="t" style="left:1992.50px;top:216.00px;font-size:19.30px;color:#fff;transform:scaleX(0.8892);transform-origin:0 0;">Data</div>
<div class="r" style="left:2156.25px;top:142.50px;width:112.50px;height:112.50px;background:#fff;border-radius:50%"></div>
<div class="r" style="left:2182.00px;top:173.00px;width:60.70px;height:52.70px;background:#6268f0;"></div>
<div class="r" style="left:2190.00px;top:181.00px;width:17.50px;height:12.70px;background:#fff;"></div>
<div class="r" style="left:2190.00px;top:203.00px;width:17.50px;height:13.80px;background:#fff;"></div>
<div class="r" style="left:2216.30px;top:181.00px;width:18.20px;height:12.70px;background:#fff;"></div>
<div class="r" style="left:2216.30px;top:203.00px;width:18.20px;height:13.80px;background:#fff;"></div>
<div class="t" style="left:2294.75px;top:156.00px;font-size:50.00px;color:#fff;font-weight:bold;transform:scaleX(0.9943);transform-origin:0 0;-webkit-text-stroke:1.3px #fff;">FINM</div>
<svg class="r" style="left:2412.00px;top:152.00px;" width="42" height="48" viewBox="0 0 42 48"><circle cx="19.8" cy="28" r="13" fill="none" stroke="#fff" stroke-width="9"/><rect x="15.6" y="0" width="8.4" height="30" rx="4.2" fill="#fff" stroke="#292929" stroke-width="2.4"/></svg>
<div class="t" style="left:2452.50px;top:156.00px;font-size:50.00px;color:#fff;font-weight:bold;transform:scaleX(0.8460);transform-origin:0 0;-webkit-text-stroke:1.3px #fff;">DELSLAB</div>
<div class="t" style="left:2295.16px;top:208.00px;font-size:35.50px;color:#fff;">T</div>
<div class="t" style="left:2338.00px;top:208.00px;font-size:35.50px;color:#fff;">e</div>
<div class="t" style="left:2382.46px;top:208.00px;font-size:35.50px;color:#fff;">m</div>
<div class="t" style="left:2438.63px;top:208.00px;font-size:35.50px;color:#fff;">p</div>
<div class="t" style="left:2481.43px;top:208.00px;font-size:35.50px;color:#fff;">l</div>
<div class="t" style="left:2511.13px;top:208.00px;font-size:35.50px;color:#fff;">a</div>
<div class="t" style="left:2555.44px;top:208.00px;font-size:35.50px;color:#fff;">t</div>
<div class="t" style="left:2590.50px;top:208.00px;font-size:35.50px;color:#fff;">e</div>
<div class="t" style="left:2634.62px;top:208.00px;font-size:35.50px;color:#fff;">s</div>
<svg class="r" style="left:2848.30px;top:252.00px;" width="18" height="11" viewBox="0 0 18 11"><path d="M2 2 L9.00 9.00 L16.00 2" fill="none" stroke="#ffffff" stroke-width="1.8" stroke-linecap="round" stroke-linejoin="round"/></svg>
</div></body></html>
